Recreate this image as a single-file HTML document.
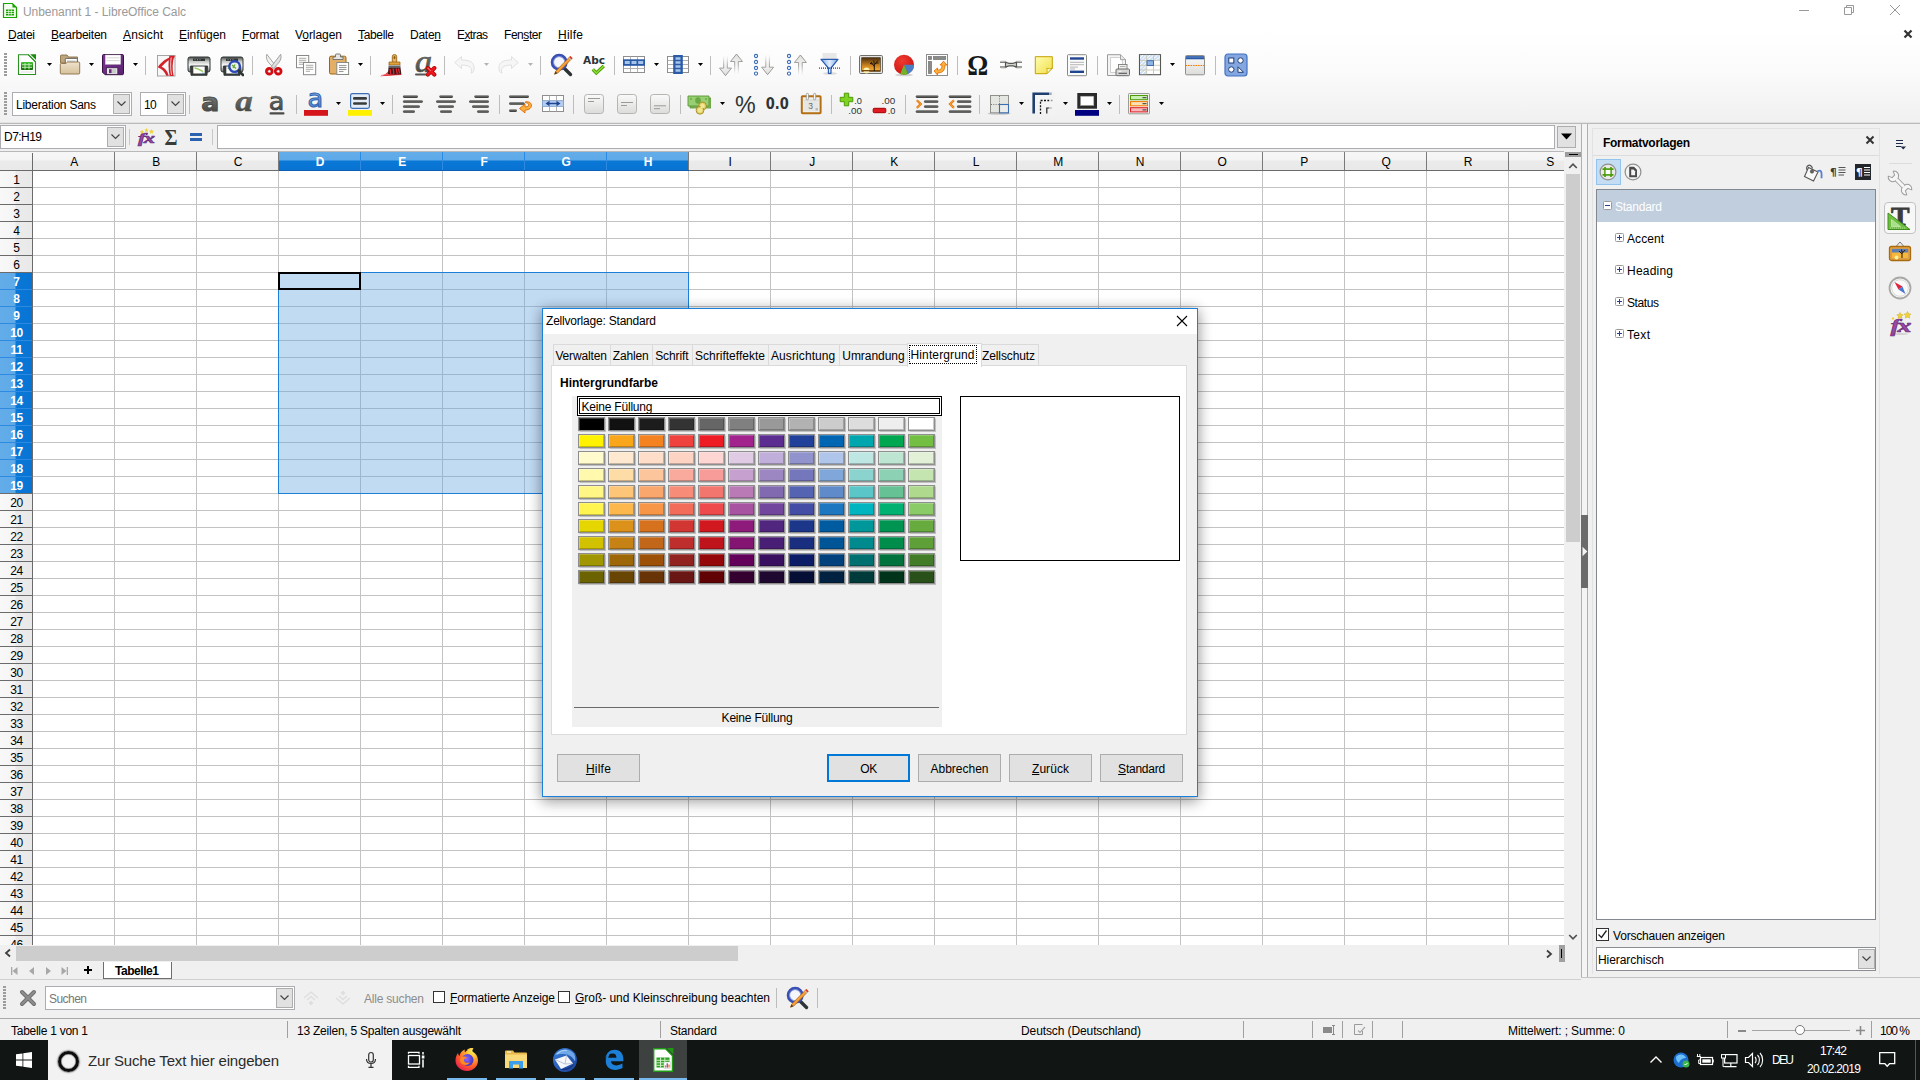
<!DOCTYPE html>
<html lang="de"><head><meta charset="utf-8"><title>Unbenannt 1 - LibreOffice Calc</title>
<style>
html,body{margin:0;padding:0;}
body{width:1920px;height:1080px;overflow:hidden;position:relative;background:#f0f0f0;font-family:"Liberation Sans","DejaVu Sans",sans-serif;font-size:12px;}
div,span.t,svg{position:absolute;box-sizing:border-box;}
span.t{white-space:nowrap;}
.sec{left:0;top:0;width:0;height:0;overflow:visible;}
u{text-decoration:underline;text-underline-offset:1px;}
</style></head>
<body>
<div class="sec" id="title-bar">
<div style="left:0px;top:0px;width:1920px;height:123px;background:linear-gradient(#fff 0,#fff 28px,#fbfbfb 70px,#f0f0f0 122px);"></div>
<div style="left:0px;top:122px;width:1920px;height:2px;background:linear-gradient(#e3e3e3 0,#e3e3e3 1px,#b9b9b9 1px);"></div>
<svg style="left:2px;top:2px;" width="16" height="17" viewBox="0 0 16 17"><path d="M1.5 1.5h9l4 4v10h-13z" fill="#f4fbef" stroke="#18a303" stroke-width="1.2"/><path d="M10.5 1.5l4 4h-4z" fill="#18a303"/><rect x="4" y="7.5" width="8" height="6" fill="#18a303"/><path d="M4 9.5h8M4 11.5h8M6.7 7.5v6M9.3 7.5v6" stroke="#fff" stroke-width=".7"/></svg>
<span class="t" style="left:23px;top:5.84px;font-size:12px;line-height:12px;color:#9a9a9a;letter-spacing:-0.053px;">Unbenannt 1 - LibreOffice Calc</span>
<div style="left:1799px;top:10px;width:10px;height:1px;background:#999;"></div>
<svg style="left:1843px;top:4px;" width="12" height="12" viewBox="0 0 12 12"><path d="M1.5 3.5h7v7h-7z M3.5 3.5v-2h7v7h-2" fill="none" stroke="#999" stroke-width="1"/></svg>
<svg style="left:1889px;top:4px;" width="12" height="12" viewBox="0 0 12 12"><path d="M1 1l10 10M11 1L1 11" stroke="#999" stroke-width="1"/></svg>
</div>
<div class="sec" id="menu-bar">
<span class="t" style="left:8px;top:28.54px;font-size:12px;line-height:12px;color:#000;letter-spacing:-0.254px;"><u>D</u>atei</span>
<span class="t" style="left:51px;top:28.54px;font-size:12px;line-height:12px;color:#000;letter-spacing:-0.227px;"><u>B</u>earbeiten</span>
<span class="t" style="left:123px;top:28.54px;font-size:12px;line-height:12px;color:#000;letter-spacing:0.107px;"><u>A</u>nsicht</span>
<span class="t" style="left:179px;top:28.54px;font-size:12px;line-height:12px;color:#000;letter-spacing:-0.054px;"><u>E</u>infügen</span>
<span class="t" style="left:242px;top:28.54px;font-size:12px;line-height:12px;color:#000;letter-spacing:-0.203px;"><u>F</u>ormat</span>
<span class="t" style="left:295px;top:28.54px;font-size:12px;line-height:12px;color:#000;letter-spacing:-0.054px;">V<u>o</u>rlagen</span>
<span class="t" style="left:358px;top:28.54px;font-size:12px;line-height:12px;color:#000;letter-spacing:-0.339px;"><u>T</u>abelle</span>
<span class="t" style="left:410px;top:28.54px;font-size:12px;line-height:12px;color:#000;letter-spacing:-0.258px;">Date<u>n</u></span>
<span class="t" style="left:457px;top:28.54px;font-size:12px;line-height:12px;color:#000;letter-spacing:-0.603px;">E<u>x</u>tras</span>
<span class="t" style="left:504px;top:28.54px;font-size:12px;line-height:12px;color:#000;letter-spacing:-0.448px;">Fen<u>s</u>ter</span>
<span class="t" style="left:558px;top:28.54px;font-size:12px;line-height:12px;color:#000;letter-spacing:0.246px;"><u>H</u>ilfe</span>
<svg style="left:1903px;top:29px;" width="10" height="10" viewBox="0 0 10 10"><path d="M1.5 1.5l7 7M8.5 1.5l-7 7" stroke="#333" stroke-width="2.2"/></svg>
</div>
<div class="sec" id="formula-bar">
<div style="left:0px;top:125px;width:126px;height:24px;background:#fff;border:1px solid #abadb3;"></div>
<span class="t" style="left:4px;top:131.34px;font-size:12px;line-height:12px;color:#000;letter-spacing:-0.537px;">D7:H19</span>
<div style="left:107px;top:127px;width:17px;height:20px;background:#e1e1e1;border:1px solid #adadad;"></div>
<svg style="left:110px;top:133px;" width="11" height="8" viewBox="0 0 11 8"><path d="M1.5 1.5l4 4 4-4" fill="none" stroke="#444" stroke-width="1.2"/></svg>
<div style="left:129px;top:129px;width:1px;height:16px;background:#c8c8c8;"></div>
<div style="left:212px;top:129px;width:1px;height:16px;background:#c8c8c8;"></div>
<svg style="left:136px;top:127px;" width="20" height="20" viewBox="0 0 20 20"><text x="2" y="16.300" font-family="Liberation Serif,serif" font-style="italic" font-weight="bold" font-size="14" fill="#9a4aa6" stroke="#6a2c78" stroke-width=".6" letter-spacing="-1" textLength="15.500" lengthAdjust="spacingAndGlyphs">fx</text><path d="M6 2.500l.7 1.400 1.500.2-1.100 1 .3 1.500-1.400-.7-1.400.7.300-1.500-1.100-1 1.500-.2z" fill="#f0d23c"/><path d="M10.500 1l.7 1.400 1.500.2-1.100 1 .3 1.500-1.400-.7-1.400.7.300-1.500-1.100-1 1.500-.2z" fill="#f0d23c"/><path d="M15.500 2l.8 1.600 1.700.2-1.200 1.200.3 1.700-1.600-.8-1.600.8.300-1.700-1.200-1.200 1.700-.2z" fill="#f0d23c"/></svg>
<svg style="left:163px;top:127px;" width="18" height="20" viewBox="0 0 18 20"><text x="1.500" y="17.800" font-family="Liberation Serif,serif" font-weight="bold" font-size="24" fill="#3a3c3a" textLength="13" lengthAdjust="spacingAndGlyphs">Σ</text></svg>
<div style="left:190px;top:133px;width:12px;height:2.8px;background:#2b62b0;"></div>
<div style="left:190px;top:138.2px;width:12px;height:2.8px;background:#2b62b0;"></div>
<div style="left:217px;top:125px;width:1338px;height:24px;background:#fff;border:1px solid #abadb3;"></div>
<div style="left:1557px;top:126px;width:19px;height:22px;background:#e1e1e1;border:1px solid #adadad;"></div>
<svg style="left:1560px;top:132px;" width="13" height="9" viewBox="0 0 13 9"><path d="M1 1.5h11l-5.5 6z" fill="#000"/></svg>
</div>
<div class="sec" id="grid">
<div style="left:0px;top:152px;width:1564px;height:793px;background:#fff;overflow:hidden;"></div>
<div style="left:33px;top:171px;width:1531px;height:774px;background-image:linear-gradient(to right,transparent 81px,#c3c3c3 81px),linear-gradient(to bottom,transparent 16px,#c3c3c3 16px);background-size:82px 17px,82px 17px;"></div>
<div style="left:0px;top:151px;width:1564px;height:1px;background:#b9b9b9;"></div>
<div style="left:0px;top:152px;width:1564px;height:18px;background:linear-gradient(#f7f7f7 0,#f4f4f4 8px,#ebebeb 9px,#e9e9e9 18px);"></div>
<div style="left:0px;top:170px;width:32px;height:775px;background:linear-gradient(to right,#f8f8f8 0,#f5f5f5 15px,#ebebeb 16px,#e9e9e9 32px);"></div>
<div style="left:279px;top:152px;width:410px;height:18px;background:linear-gradient(#62ade9 0,#5ea9e7 8px,#0a78d7 9px,#0873d2 18px);"></div>
<div style="left:0px;top:272px;width:32px;height:221px;background:linear-gradient(to right,#62ade9 0,#5ea9e7 15px,#0a78d7 16px,#0873d2 32px);"></div>
<div style="left:114px;top:152px;width:1px;height:18px;background:#7a7a7a;"></div>
<span class="t" style="left:-76.0px;width:300px;text-align:center;top:155.54px;font-size:12px;line-height:12px;color:#000;letter-spacing:-0.300px;">A</span>
<div style="left:196px;top:152px;width:1px;height:18px;background:#7a7a7a;"></div>
<span class="t" style="left:6.0px;width:300px;text-align:center;top:155.54px;font-size:12px;line-height:12px;color:#000;letter-spacing:-0.300px;">B</span>
<div style="left:278px;top:152px;width:1px;height:18px;background:#7a7a7a;"></div>
<span class="t" style="left:88.0px;width:300px;text-align:center;top:155.54px;font-size:12px;line-height:12px;color:#000;letter-spacing:-0.300px;">C</span>
<div style="left:360px;top:152px;width:1px;height:18px;background:#2d8ae0;"></div>
<span class="t" style="left:170.0px;width:300px;text-align:center;top:155.54px;font-size:12px;line-height:12px;color:#fff;letter-spacing:-0.300px;font-weight:700;">D</span>
<div style="left:442px;top:152px;width:1px;height:18px;background:#2d8ae0;"></div>
<span class="t" style="left:252.0px;width:300px;text-align:center;top:155.54px;font-size:12px;line-height:12px;color:#fff;letter-spacing:-0.300px;font-weight:700;">E</span>
<div style="left:524px;top:152px;width:1px;height:18px;background:#2d8ae0;"></div>
<span class="t" style="left:334.0px;width:300px;text-align:center;top:155.54px;font-size:12px;line-height:12px;color:#fff;letter-spacing:-0.300px;font-weight:700;">F</span>
<div style="left:606px;top:152px;width:1px;height:18px;background:#2d8ae0;"></div>
<span class="t" style="left:416.0px;width:300px;text-align:center;top:155.54px;font-size:12px;line-height:12px;color:#fff;letter-spacing:-0.300px;font-weight:700;">G</span>
<div style="left:688px;top:152px;width:1px;height:18px;background:#7a7a7a;"></div>
<span class="t" style="left:498.0px;width:300px;text-align:center;top:155.54px;font-size:12px;line-height:12px;color:#fff;letter-spacing:-0.300px;font-weight:700;">H</span>
<div style="left:770px;top:152px;width:1px;height:18px;background:#7a7a7a;"></div>
<span class="t" style="left:580.0px;width:300px;text-align:center;top:155.54px;font-size:12px;line-height:12px;color:#000;letter-spacing:-0.300px;">I</span>
<div style="left:852px;top:152px;width:1px;height:18px;background:#7a7a7a;"></div>
<span class="t" style="left:662.0px;width:300px;text-align:center;top:155.54px;font-size:12px;line-height:12px;color:#000;letter-spacing:-0.300px;">J</span>
<div style="left:934px;top:152px;width:1px;height:18px;background:#7a7a7a;"></div>
<span class="t" style="left:744.0px;width:300px;text-align:center;top:155.54px;font-size:12px;line-height:12px;color:#000;letter-spacing:-0.300px;">K</span>
<div style="left:1016px;top:152px;width:1px;height:18px;background:#7a7a7a;"></div>
<span class="t" style="left:826.0px;width:300px;text-align:center;top:155.54px;font-size:12px;line-height:12px;color:#000;letter-spacing:-0.300px;">L</span>
<div style="left:1098px;top:152px;width:1px;height:18px;background:#7a7a7a;"></div>
<span class="t" style="left:908.0px;width:300px;text-align:center;top:155.54px;font-size:12px;line-height:12px;color:#000;letter-spacing:-0.300px;">M</span>
<div style="left:1180px;top:152px;width:1px;height:18px;background:#7a7a7a;"></div>
<span class="t" style="left:990.0px;width:300px;text-align:center;top:155.54px;font-size:12px;line-height:12px;color:#000;letter-spacing:-0.300px;">N</span>
<div style="left:1262px;top:152px;width:1px;height:18px;background:#7a7a7a;"></div>
<span class="t" style="left:1072.0px;width:300px;text-align:center;top:155.54px;font-size:12px;line-height:12px;color:#000;letter-spacing:-0.300px;">O</span>
<div style="left:1344px;top:152px;width:1px;height:18px;background:#7a7a7a;"></div>
<span class="t" style="left:1154.0px;width:300px;text-align:center;top:155.54px;font-size:12px;line-height:12px;color:#000;letter-spacing:-0.300px;">P</span>
<div style="left:1426px;top:152px;width:1px;height:18px;background:#7a7a7a;"></div>
<span class="t" style="left:1236.0px;width:300px;text-align:center;top:155.54px;font-size:12px;line-height:12px;color:#000;letter-spacing:-0.300px;">Q</span>
<div style="left:1508px;top:152px;width:1px;height:18px;background:#7a7a7a;"></div>
<span class="t" style="left:1318.0px;width:300px;text-align:center;top:155.54px;font-size:12px;line-height:12px;color:#000;letter-spacing:-0.300px;">R</span>
<span class="t" style="left:1400px;width:300px;text-align:center;top:155.54px;font-size:12px;line-height:12px;color:#000;letter-spacing:-0.300px;">S</span>
<div style="left:32px;top:153px;width:1px;height:792px;background:#6b6b6b;"></div>
<div style="left:0px;top:170px;width:1564px;height:1px;background:#6b6b6b;"></div>
<div style="left:279px;top:170px;width:410px;height:1px;background:#0a5fb0;"></div>
<div style="left:0px;top:187px;width:32px;height:1px;background:#6b6b6b;"></div>
<span class="t" style="left:-133.5px;width:300px;text-align:center;top:174.04px;font-size:12px;line-height:12px;color:#000;letter-spacing:-0.300px;">1</span>
<div style="left:0px;top:204px;width:32px;height:1px;background:#6b6b6b;"></div>
<span class="t" style="left:-133.5px;width:300px;text-align:center;top:191.04px;font-size:12px;line-height:12px;color:#000;letter-spacing:-0.300px;">2</span>
<div style="left:0px;top:221px;width:32px;height:1px;background:#6b6b6b;"></div>
<span class="t" style="left:-133.5px;width:300px;text-align:center;top:208.04px;font-size:12px;line-height:12px;color:#000;letter-spacing:-0.300px;">3</span>
<div style="left:0px;top:238px;width:32px;height:1px;background:#6b6b6b;"></div>
<span class="t" style="left:-133.5px;width:300px;text-align:center;top:225.04px;font-size:12px;line-height:12px;color:#000;letter-spacing:-0.300px;">4</span>
<div style="left:0px;top:255px;width:32px;height:1px;background:#6b6b6b;"></div>
<span class="t" style="left:-133.5px;width:300px;text-align:center;top:242.04px;font-size:12px;line-height:12px;color:#000;letter-spacing:-0.300px;">5</span>
<div style="left:0px;top:272px;width:32px;height:1px;background:#6b6b6b;"></div>
<span class="t" style="left:-133.5px;width:300px;text-align:center;top:259.04px;font-size:12px;line-height:12px;color:#000;letter-spacing:-0.300px;">6</span>
<div style="left:0px;top:289px;width:32px;height:1px;background:#2d8ae0;"></div>
<span class="t" style="left:-133.5px;width:300px;text-align:center;top:276.04px;font-size:12px;line-height:12px;color:#fff;letter-spacing:-0.300px;font-weight:700;">7</span>
<div style="left:0px;top:306px;width:32px;height:1px;background:#2d8ae0;"></div>
<span class="t" style="left:-133.5px;width:300px;text-align:center;top:293.04px;font-size:12px;line-height:12px;color:#fff;letter-spacing:-0.300px;font-weight:700;">8</span>
<div style="left:0px;top:323px;width:32px;height:1px;background:#2d8ae0;"></div>
<span class="t" style="left:-133.5px;width:300px;text-align:center;top:310.04px;font-size:12px;line-height:12px;color:#fff;letter-spacing:-0.300px;font-weight:700;">9</span>
<div style="left:0px;top:340px;width:32px;height:1px;background:#2d8ae0;"></div>
<span class="t" style="left:-133.5px;width:300px;text-align:center;top:327.04px;font-size:12px;line-height:12px;color:#fff;letter-spacing:-0.300px;font-weight:700;">10</span>
<div style="left:0px;top:357px;width:32px;height:1px;background:#2d8ae0;"></div>
<span class="t" style="left:-133.5px;width:300px;text-align:center;top:344.04px;font-size:12px;line-height:12px;color:#fff;letter-spacing:-0.300px;font-weight:700;">11</span>
<div style="left:0px;top:374px;width:32px;height:1px;background:#2d8ae0;"></div>
<span class="t" style="left:-133.5px;width:300px;text-align:center;top:361.04px;font-size:12px;line-height:12px;color:#fff;letter-spacing:-0.300px;font-weight:700;">12</span>
<div style="left:0px;top:391px;width:32px;height:1px;background:#2d8ae0;"></div>
<span class="t" style="left:-133.5px;width:300px;text-align:center;top:378.04px;font-size:12px;line-height:12px;color:#fff;letter-spacing:-0.300px;font-weight:700;">13</span>
<div style="left:0px;top:408px;width:32px;height:1px;background:#2d8ae0;"></div>
<span class="t" style="left:-133.5px;width:300px;text-align:center;top:395.04px;font-size:12px;line-height:12px;color:#fff;letter-spacing:-0.300px;font-weight:700;">14</span>
<div style="left:0px;top:425px;width:32px;height:1px;background:#2d8ae0;"></div>
<span class="t" style="left:-133.5px;width:300px;text-align:center;top:412.04px;font-size:12px;line-height:12px;color:#fff;letter-spacing:-0.300px;font-weight:700;">15</span>
<div style="left:0px;top:442px;width:32px;height:1px;background:#2d8ae0;"></div>
<span class="t" style="left:-133.5px;width:300px;text-align:center;top:429.04px;font-size:12px;line-height:12px;color:#fff;letter-spacing:-0.300px;font-weight:700;">16</span>
<div style="left:0px;top:459px;width:32px;height:1px;background:#2d8ae0;"></div>
<span class="t" style="left:-133.5px;width:300px;text-align:center;top:446.04px;font-size:12px;line-height:12px;color:#fff;letter-spacing:-0.300px;font-weight:700;">17</span>
<div style="left:0px;top:476px;width:32px;height:1px;background:#2d8ae0;"></div>
<span class="t" style="left:-133.5px;width:300px;text-align:center;top:463.04px;font-size:12px;line-height:12px;color:#fff;letter-spacing:-0.300px;font-weight:700;">18</span>
<div style="left:0px;top:493px;width:32px;height:1px;background:#6b6b6b;"></div>
<span class="t" style="left:-133.5px;width:300px;text-align:center;top:480.04px;font-size:12px;line-height:12px;color:#fff;letter-spacing:-0.300px;font-weight:700;">19</span>
<div style="left:0px;top:510px;width:32px;height:1px;background:#6b6b6b;"></div>
<span class="t" style="left:-133.5px;width:300px;text-align:center;top:497.04px;font-size:12px;line-height:12px;color:#000;letter-spacing:-0.300px;">20</span>
<div style="left:0px;top:527px;width:32px;height:1px;background:#6b6b6b;"></div>
<span class="t" style="left:-133.5px;width:300px;text-align:center;top:514.04px;font-size:12px;line-height:12px;color:#000;letter-spacing:-0.300px;">21</span>
<div style="left:0px;top:544px;width:32px;height:1px;background:#6b6b6b;"></div>
<span class="t" style="left:-133.5px;width:300px;text-align:center;top:531.04px;font-size:12px;line-height:12px;color:#000;letter-spacing:-0.300px;">22</span>
<div style="left:0px;top:561px;width:32px;height:1px;background:#6b6b6b;"></div>
<span class="t" style="left:-133.5px;width:300px;text-align:center;top:548.04px;font-size:12px;line-height:12px;color:#000;letter-spacing:-0.300px;">23</span>
<div style="left:0px;top:578px;width:32px;height:1px;background:#6b6b6b;"></div>
<span class="t" style="left:-133.5px;width:300px;text-align:center;top:565.04px;font-size:12px;line-height:12px;color:#000;letter-spacing:-0.300px;">24</span>
<div style="left:0px;top:595px;width:32px;height:1px;background:#6b6b6b;"></div>
<span class="t" style="left:-133.5px;width:300px;text-align:center;top:582.04px;font-size:12px;line-height:12px;color:#000;letter-spacing:-0.300px;">25</span>
<div style="left:0px;top:612px;width:32px;height:1px;background:#6b6b6b;"></div>
<span class="t" style="left:-133.5px;width:300px;text-align:center;top:599.04px;font-size:12px;line-height:12px;color:#000;letter-spacing:-0.300px;">26</span>
<div style="left:0px;top:629px;width:32px;height:1px;background:#6b6b6b;"></div>
<span class="t" style="left:-133.5px;width:300px;text-align:center;top:616.04px;font-size:12px;line-height:12px;color:#000;letter-spacing:-0.300px;">27</span>
<div style="left:0px;top:646px;width:32px;height:1px;background:#6b6b6b;"></div>
<span class="t" style="left:-133.5px;width:300px;text-align:center;top:633.04px;font-size:12px;line-height:12px;color:#000;letter-spacing:-0.300px;">28</span>
<div style="left:0px;top:663px;width:32px;height:1px;background:#6b6b6b;"></div>
<span class="t" style="left:-133.5px;width:300px;text-align:center;top:650.04px;font-size:12px;line-height:12px;color:#000;letter-spacing:-0.300px;">29</span>
<div style="left:0px;top:680px;width:32px;height:1px;background:#6b6b6b;"></div>
<span class="t" style="left:-133.5px;width:300px;text-align:center;top:667.04px;font-size:12px;line-height:12px;color:#000;letter-spacing:-0.300px;">30</span>
<div style="left:0px;top:697px;width:32px;height:1px;background:#6b6b6b;"></div>
<span class="t" style="left:-133.5px;width:300px;text-align:center;top:684.04px;font-size:12px;line-height:12px;color:#000;letter-spacing:-0.300px;">31</span>
<div style="left:0px;top:714px;width:32px;height:1px;background:#6b6b6b;"></div>
<span class="t" style="left:-133.5px;width:300px;text-align:center;top:701.04px;font-size:12px;line-height:12px;color:#000;letter-spacing:-0.300px;">32</span>
<div style="left:0px;top:731px;width:32px;height:1px;background:#6b6b6b;"></div>
<span class="t" style="left:-133.5px;width:300px;text-align:center;top:718.04px;font-size:12px;line-height:12px;color:#000;letter-spacing:-0.300px;">33</span>
<div style="left:0px;top:748px;width:32px;height:1px;background:#6b6b6b;"></div>
<span class="t" style="left:-133.5px;width:300px;text-align:center;top:735.04px;font-size:12px;line-height:12px;color:#000;letter-spacing:-0.300px;">34</span>
<div style="left:0px;top:765px;width:32px;height:1px;background:#6b6b6b;"></div>
<span class="t" style="left:-133.5px;width:300px;text-align:center;top:752.04px;font-size:12px;line-height:12px;color:#000;letter-spacing:-0.300px;">35</span>
<div style="left:0px;top:782px;width:32px;height:1px;background:#6b6b6b;"></div>
<span class="t" style="left:-133.5px;width:300px;text-align:center;top:769.04px;font-size:12px;line-height:12px;color:#000;letter-spacing:-0.300px;">36</span>
<div style="left:0px;top:799px;width:32px;height:1px;background:#6b6b6b;"></div>
<span class="t" style="left:-133.5px;width:300px;text-align:center;top:786.04px;font-size:12px;line-height:12px;color:#000;letter-spacing:-0.300px;">37</span>
<div style="left:0px;top:816px;width:32px;height:1px;background:#6b6b6b;"></div>
<span class="t" style="left:-133.5px;width:300px;text-align:center;top:803.04px;font-size:12px;line-height:12px;color:#000;letter-spacing:-0.300px;">38</span>
<div style="left:0px;top:833px;width:32px;height:1px;background:#6b6b6b;"></div>
<span class="t" style="left:-133.5px;width:300px;text-align:center;top:820.04px;font-size:12px;line-height:12px;color:#000;letter-spacing:-0.300px;">39</span>
<div style="left:0px;top:850px;width:32px;height:1px;background:#6b6b6b;"></div>
<span class="t" style="left:-133.5px;width:300px;text-align:center;top:837.04px;font-size:12px;line-height:12px;color:#000;letter-spacing:-0.300px;">40</span>
<div style="left:0px;top:867px;width:32px;height:1px;background:#6b6b6b;"></div>
<span class="t" style="left:-133.5px;width:300px;text-align:center;top:854.04px;font-size:12px;line-height:12px;color:#000;letter-spacing:-0.300px;">41</span>
<div style="left:0px;top:884px;width:32px;height:1px;background:#6b6b6b;"></div>
<span class="t" style="left:-133.5px;width:300px;text-align:center;top:871.04px;font-size:12px;line-height:12px;color:#000;letter-spacing:-0.300px;">42</span>
<div style="left:0px;top:901px;width:32px;height:1px;background:#6b6b6b;"></div>
<span class="t" style="left:-133.5px;width:300px;text-align:center;top:888.04px;font-size:12px;line-height:12px;color:#000;letter-spacing:-0.300px;">43</span>
<div style="left:0px;top:918px;width:32px;height:1px;background:#6b6b6b;"></div>
<span class="t" style="left:-133.5px;width:300px;text-align:center;top:905.04px;font-size:12px;line-height:12px;color:#000;letter-spacing:-0.300px;">44</span>
<div style="left:0px;top:935px;width:32px;height:1px;background:#6b6b6b;"></div>
<span class="t" style="left:-133.5px;width:300px;text-align:center;top:922.04px;font-size:12px;line-height:12px;color:#000;letter-spacing:-0.300px;">45</span>
<span class="t" style="left:-133.5px;width:300px;text-align:center;top:939.04px;font-size:12px;line-height:12px;color:#000;letter-spacing:-0.300px;">46</span>
<div style="left:278px;top:272px;width:411px;height:222px;background:rgba(100,165,225,.40);border:1px solid #1e7fd6;"></div>
<div style="left:278px;top:272px;width:83px;height:18px;border:2px solid #000;"></div>
</div>
<div class="sec" id="scrollbars">
<div style="left:1565px;top:152px;width:16px;height:793px;background:#f0f0f0;"></div>
<div style="left:1565px;top:152px;width:16px;height:5px;background:#9d9d9d;"></div>
<div style="left:1569px;top:154px;width:9px;height:1px;background:#000;"></div>
<svg style="left:1568px;top:162px;" width="10" height="8" viewBox="0 0 10 8"><path d="M1.2 6l3.8-3.8L8.8 6" fill="none" stroke="#505050" stroke-width="1.7"/></svg>
<div style="left:1566px;top:174px;width:14px;height:368px;background:#cdcdcd;"></div>
<svg style="left:1568px;top:933px;" width="10" height="8" viewBox="0 0 10 8"><path d="M1.2 2l3.8 3.8L8.8 2" fill="none" stroke="#505050" stroke-width="1.7"/></svg>
</div>
<div class="sec" id="toolbars">
<svg style="left:4px;top:53px;" width="3" height="24" viewBox="0 0 3 24"><rect x="0" y="0" width="3" height="2" fill="#9c9c9c"/><rect x="0" y="3" width="3" height="2" fill="#9c9c9c"/><rect x="0" y="6" width="3" height="2" fill="#9c9c9c"/><rect x="0" y="9" width="3" height="2" fill="#9c9c9c"/><rect x="0" y="12" width="3" height="2" fill="#9c9c9c"/><rect x="0" y="15" width="3" height="2" fill="#9c9c9c"/><rect x="0" y="18" width="3" height="2" fill="#9c9c9c"/><rect x="0" y="21" width="3" height="2" fill="#9c9c9c"/></svg>
<svg style="left:4px;top:92px;" width="3" height="24" viewBox="0 0 3 24"><rect x="0" y="0" width="3" height="2" fill="#9c9c9c"/><rect x="0" y="3" width="3" height="2" fill="#9c9c9c"/><rect x="0" y="6" width="3" height="2" fill="#9c9c9c"/><rect x="0" y="9" width="3" height="2" fill="#9c9c9c"/><rect x="0" y="12" width="3" height="2" fill="#9c9c9c"/><rect x="0" y="15" width="3" height="2" fill="#9c9c9c"/><rect x="0" y="18" width="3" height="2" fill="#9c9c9c"/><rect x="0" y="21" width="3" height="2" fill="#9c9c9c"/></svg>
<svg style="left:3px;top:986px;" width="3" height="24" viewBox="0 0 3 24"><rect x="0" y="0" width="3" height="2" fill="#9c9c9c"/><rect x="0" y="3" width="3" height="2" fill="#9c9c9c"/><rect x="0" y="6" width="3" height="2" fill="#9c9c9c"/><rect x="0" y="9" width="3" height="2" fill="#9c9c9c"/><rect x="0" y="12" width="3" height="2" fill="#9c9c9c"/><rect x="0" y="15" width="3" height="2" fill="#9c9c9c"/><rect x="0" y="18" width="3" height="2" fill="#9c9c9c"/><rect x="0" y="21" width="3" height="2" fill="#9c9c9c"/></svg>
<svg width="0" height="0" style="left:0;top:0"><defs>
<linearGradient id="gGreen" x1="0" y1="0" x2="0" y2="1"><stop offset="0" stop-color="#43c330"/><stop offset="1" stop-color="#106802"/></linearGradient>
<linearGradient id="gTan" x1="0" y1="0" x2="0" y2="1"><stop offset="0" stop-color="#efe3cc"/><stop offset="1" stop-color="#d6c19b"/></linearGradient>
<linearGradient id="gPurple" x1="0" y1="0" x2="1" y2="1"><stop offset="0" stop-color="#7c3591"/><stop offset="1" stop-color="#5a2370"/></linearGradient>
<linearGradient id="gPrn" x1="0" y1="0" x2="0" y2="1"><stop offset="0" stop-color="#fdfdfd"/><stop offset="1" stop-color="#8b8d89"/></linearGradient>
<linearGradient id="gGray" x1="0" y1="0" x2="0" y2="1"><stop offset="0" stop-color="#fafafa"/><stop offset="1" stop-color="#dcdcda"/></linearGradient>
<linearGradient id="gA" x1="0" y1="0" x2="0" y2="1"><stop offset="0" stop-color="#8a8c88"/><stop offset="1" stop-color="#3a3c39"/></linearGradient>
<linearGradient id="gBar" x1="0" y1="0" x2="0" y2="1"><stop offset="0" stop-color="#80827e"/><stop offset="1" stop-color="#2e302d"/></linearGradient>
<linearGradient id="gArrD" x1="0" y1="0" x2="0" y2="1"><stop offset="0" stop-color="#fff" stop-opacity="0"/><stop offset=".45" stop-color="#f4f4f2"/><stop offset="1" stop-color="#dededc"/></linearGradient>
<linearGradient id="gArrDs" x1="0" y1="0" x2="0" y2="1"><stop offset="0" stop-color="#999" stop-opacity="0"/><stop offset=".5" stop-color="#9c9c9a"/><stop offset="1" stop-color="#8a8a88"/></linearGradient>
<linearGradient id="gArrU" x1="0" y1="1" x2="0" y2="0"><stop offset="0" stop-color="#fff" stop-opacity="0"/><stop offset=".45" stop-color="#f4f4f2"/><stop offset="1" stop-color="#dededc"/></linearGradient>
<linearGradient id="gArrUs" x1="0" y1="1" x2="0" y2="0"><stop offset="0" stop-color="#999" stop-opacity="0"/><stop offset=".5" stop-color="#9c9c9a"/><stop offset="1" stop-color="#8a8a88"/></linearGradient>
<linearGradient id="gFun" x1="0" y1="0" x2="1" y2="0"><stop offset="0" stop-color="#7fa8e0"/><stop offset=".5" stop-color="#e3eefb"/><stop offset="1" stop-color="#7fa8e0"/></linearGradient>
<linearGradient id="gSun" x1="0" y1="0" x2="0" y2="1"><stop offset="0" stop-color="#4a2f10"/><stop offset=".55" stop-color="#c77f1c"/><stop offset="1" stop-color="#fcb63a"/></linearGradient>
<radialGradient id="gPie" cx=".4" cy=".3" r=".8"><stop offset="0" stop-color="#f03a30"/><stop offset="1" stop-color="#c80f0f"/></radialGradient>
<linearGradient id="gNote" x1="0" y1="0" x2="1" y2="1"><stop offset="0" stop-color="#fffdb0"/><stop offset="1" stop-color="#f1df4a"/></linearGradient>
<linearGradient id="gOr" x1="0" y1="0" x2="0" y2="1"><stop offset="0" stop-color="#fcc16a"/><stop offset="1" stop-color="#f08a1c"/></linearGradient>
<linearGradient id="gBlueA" x1="0" y1="0" x2="0" y2="1"><stop offset="0" stop-color="#a9c8f0"/><stop offset="1" stop-color="#3f74c4"/></linearGradient>
</defs></svg>
<svg style="left:15px;top:53px;" width="24" height="24" viewBox="0 0 24 24"><path d="M3.500 1.700h9.800l7.200 7.200v12.600h-17z" fill="#fff" stroke="#2b9222" stroke-width="1.100"/><path d="M15.200 1.200h5.800v5.800z" fill="#1d8a12"/><path d="M13.300 1.700l7.200 7.200" stroke="#2b9222" stroke-width="1.100"/><rect x="6" y="9" width="12" height="8" rx=".8" fill="url(#gGreen)"/><path d="M7 11.700h10M7 14.300h10M10 10v6.500M14 10v6.500" stroke="#c8f0bf" stroke-width=".9"/><path d="M6 19h12" stroke="#d5d5d5" stroke-width=".8"/></svg>
<svg style="left:47px;top:63px;" width="5" height="3" viewBox="0 0 5 3"><path d="M0 0h5l-2.500 3z" fill="#000"/></svg>
<svg style="left:58px;top:53px;" width="24" height="24" viewBox="0 0 24 24"><path d="M2.500 3a1 1 0 0 1 1-1h5.500l1.500 2h9v6h-17z" fill="#bda57d" stroke="#8a7148" stroke-width=".9"/><rect x="7.300" y="5.400" width="12" height="7" rx=".8" fill="#fff" stroke="#5d5d5d" stroke-width=".9"/><rect x="9" y="7.300" width="8.500" height="3" fill="#d8d8d8"/><path d="M2.300 20v-8.500a1 1 0 0 1 1-1h4.500l1.700-1.500h11.200a1 1 0 0 1 1 1v10a1 1 0 0 1-1 1h-17.400a1 1 0 0 1-1-1z" fill="url(#gTan)" stroke="#8a7148" stroke-width=".9"/></svg>
<svg style="left:89px;top:63px;" width="5" height="3" viewBox="0 0 5 3"><path d="M0 0h5l-2.500 3z" fill="#000"/></svg>
<svg style="left:101px;top:53px;" width="24" height="24" viewBox="0 0 24 24"><path d="M1.500 2.700a1.200 1.200 0 0 1 1.200-1.200h18.600a1.200 1.200 0 0 1 1.200 1.200v17.800a1.200 1.200 0 0 1-1.200 1.200h-17.300l-2.500-2.500z" fill="url(#gPurple)" stroke="#3b1047" stroke-width="1"/><rect x="4.300" y="2" width="15.400" height="9.300" fill="#fff" stroke="#c9c9c9" stroke-width=".5"/><path d="M5.500 4.800h13M5.500 7.600h13" stroke="#c9cdc4" stroke-width=".8"/><rect x="5.500" y="14.800" width="11.300" height="6.500" fill="#e4e6e1" stroke="#3b1047" stroke-width=".7"/><rect x="8" y="16.200" width="2.600" height="3.900" fill="#6b2c80"/><rect x="11" y="16.200" width="4" height="3.900" fill="#c9cbc6"/></svg>
<svg style="left:133px;top:63px;" width="5" height="3" viewBox="0 0 5 3"><path d="M0 0h5l-2.500 3z" fill="#000"/></svg>
<div style="left:145px;top:56px;width:1px;height:19px;background:#bdbdbd;"></div>
<svg style="left:154px;top:53px;" width="24" height="24" viewBox="0 0 24 24"><rect x="3.500" y="2.500" width="17.500" height="20.500" fill="#f7f7f7" stroke="#9c9c9c" stroke-width=".9"/><path d="M20.500 3c-7 1.200-13.500 6-16.800 11.300 4.200 1.500 7 4.500 8.600 8.500h2.500c-1.300-4.500-3.800-7.800-7.200-9 3.500-4.300 8-7.800 12.900-9.300z" fill="#d3222a"/><path d="M15.300 2.700c-1.100 6-1.100 13.500.4 20.200h4c-1.600-6.500-1.500-13.500.8-20.200z" fill="#d3222a"/><path d="M17.200 4.500c-.8 5.500-.7 12 .3 17.500" stroke="#f3c8c8" stroke-width="1" fill="none"/></svg>
<svg style="left:187px;top:53px;" width="24" height="24" viewBox="0 0 24 24"><defs><linearGradient id="gPb" x1="0" y1="0" x2="0" y2="1"><stop offset="0" stop-color="#4a4c49"/><stop offset=".3" stop-color="#c8cac6"/><stop offset=".55" stop-color="#fafafa"/><stop offset="1" stop-color="#6d6f6b"/></linearGradient></defs><path d="M3 4h18a2 2 0 0 1 2 2v11a2 2 0 0 1-2 2h-18a2 2 0 0 1-2-2v-11a2 2 0 0 1 2-2z" fill="url(#gPb)" stroke="#2e3436" stroke-width="1"/><rect x="6" y="5.500" width="12" height="2.600" rx=".5" fill="#2e3436"/><path d="M7.500 6.800h1M10 6.800h1M12.500 6.800h1" stroke="#aaa" stroke-width="1"/><path d="M3.500 13h17l-.5 9.300h-16z" fill="#3a3c39" stroke="#2e3436" stroke-width=".9"/><path d="M6.300 13.500h11.400v7h-11.400z" fill="#fff"/><path d="M7.500 15c3 .3 5.500 1.700 8.500 3.700" stroke="#9ccc65" stroke-width="1.600" fill="none"/><rect x="15" y="19.800" width="2" height=".9" fill="#3b8fe0"/></svg>
<svg style="left:220px;top:53px;" width="24" height="24" viewBox="0 0 24 24"><defs><linearGradient id="gPb" x1="0" y1="0" x2="0" y2="1"><stop offset="0" stop-color="#4a4c49"/><stop offset=".3" stop-color="#c8cac6"/><stop offset=".55" stop-color="#fafafa"/><stop offset="1" stop-color="#6d6f6b"/></linearGradient></defs><path d="M3 4h18a2 2 0 0 1 2 2v11a2 2 0 0 1-2 2h-18a2 2 0 0 1-2-2v-11a2 2 0 0 1 2-2z" fill="url(#gPb)" stroke="#2e3436" stroke-width="1"/><rect x="6" y="5.500" width="12" height="2.600" rx=".5" fill="#2e3436"/><path d="M7.500 6.800h1M10 6.800h1M12.500 6.800h1" stroke="#aaa" stroke-width="1"/><path d="M3.500 13h17l-.5 9.300h-16z" fill="#3a3c39" stroke="#2e3436" stroke-width=".9"/><path d="M6.300 13.500h11.400v7h-11.400z" fill="#fff"/><path d="M7.500 15c3 .3 5.500 1.700 8.500 3.700" stroke="#9ccc65" stroke-width="1.600" fill="none"/><rect x="15" y="19.800" width="2" height=".9" fill="#3b8fe0"/><circle cx="14.600" cy="13.600" r="5.300" fill="#e9f3e4" stroke="#2c48b5" stroke-width="2.400"/><path d="M12 12l4 3.500M13 15l2-3.500" stroke="#6aaa3a" stroke-width="1.400"/><path d="M18.700 17.700l4.300 4.300" stroke="#2e3436" stroke-width="2.600" stroke-linecap="round"/></svg>
<div style="left:252px;top:56px;width:1px;height:19px;background:#bdbdbd;"></div>
<svg style="left:262px;top:53px;" width="24" height="24" viewBox="0 0 24 24"><path d="M4.800 1.300c-1 3 0 6 2 8.500l5.400 5.700 1.800-2.200z" fill="#f2f2f0" stroke="#8e908c" stroke-width=".8"/><path d="M18.700 1.300c1 3 0 6-2 8.500l-5.400 5.700-1.800-2.200z" fill="#e2e2e0" stroke="#8e908c" stroke-width=".8"/><circle cx="7.300" cy="18.300" r="2.900" fill="#fff" stroke="#d40d12" stroke-width="2.700"/><circle cx="16.200" cy="18.300" r="2.900" fill="#fff" stroke="#d40d12" stroke-width="2.700"/><circle cx="7.300" cy="18.300" r="1.500" fill="#fff" stroke="#a40000" stroke-width=".5"/><circle cx="16.200" cy="18.300" r="1.500" fill="#fff" stroke="#a40000" stroke-width=".5"/></svg>
<svg style="left:294px;top:53px;" width="24" height="24" viewBox="0 0 24 24"><rect x="2.500" y="2.500" width="12.200" height="12.200" fill="#fff" stroke="#888a85" stroke-width="1"/><path d="M4.8 5.3H12.3" stroke="#b0b2ae" stroke-width="1.1"/><path d="M4.8 7.3H12.3" stroke="#b0b2ae" stroke-width="1.1"/><path d="M4.8 9.3H12.3" stroke="#b0b2ae" stroke-width="1.1"/><path d="M4.800 11.300H9" stroke="#b0b2ae" stroke-width="1.100"/><rect x="9.500" y="9.500" width="12.200" height="12.200" fill="#fff" stroke="#888a85" stroke-width="1"/><path d="M11.8 12.3H19.3" stroke="#b0b2ae" stroke-width="1.1"/><path d="M11.8 14.3H19.3" stroke="#b0b2ae" stroke-width="1.1"/><path d="M11.8 16.3H19.3" stroke="#b0b2ae" stroke-width="1.1"/><path d="M11.800 18.300H16" stroke="#b0b2ae" stroke-width="1.100"/></svg>
<svg style="left:327px;top:53px;" width="24" height="24" viewBox="0 0 24 24"><rect x="2.500" y="3.200" width="16.500" height="17.800" rx="1.500" fill="#e3ae66" stroke="#9c6414" stroke-width="1"/><path d="M6 6.500v-2.500h2.500v-2.200a.8 .8 0 0 1 .8-.8h3.400a.8 .8 0 0 1 .8 .8v2.200h2.500v2.500z" fill="#e6e6e4" stroke="#6d6f6b" stroke-width=".9"/><rect x="9.800" y="9.500" width="11.800" height="12" fill="#fff" stroke="#888a85" stroke-width="1"/><path d="M12 12.5H19.5" stroke="#9a9c98" stroke-width="1.1"/><path d="M12 14.5H19.5" stroke="#9a9c98" stroke-width="1.1"/><path d="M12 16.5H19.5" stroke="#9a9c98" stroke-width="1.1"/><path d="M12 18.500H16.500" stroke="#9a9c98" stroke-width="1.100"/></svg>
<svg style="left:358px;top:63px;" width="5" height="3" viewBox="0 0 5 3"><path d="M0 0h5l-2.500 3z" fill="#000"/></svg>
<div style="left:370px;top:56px;width:1px;height:19px;background:#bdbdbd;"></div>
<svg style="left:379px;top:53px;" width="24" height="24" viewBox="0 0 24 24"><path d="M.5 23.300c7-.3 14-.8 22-1.300l-1.500-5h-11c-1.500 3.500-5 5.300-9.500 6.300z" fill="#e3262e"/><path d="M2 22.500l10-2" stroke="#f47a7f" stroke-width=".8"/><rect x="13.300" y="1.500" width="4.400" height="9" rx="2.200" fill="#e5b36a" stroke="#8f5902" stroke-width=".8"/><ellipse cx="15.500" cy="4.500" rx=".9" ry="1.500" fill="#8f5902"/><path d="M10 9h11v3h-11z" fill="#e0a040" stroke="#8f5902" stroke-width=".7"/><path d="M9.800 12h11.400l.3 2.500h-12z" fill="#2e3436"/><path d="M9.700 12.800h11.600" stroke="#eee" stroke-width=".9"/><path d="M9.500 14.500h12l.8 6.500c-4 .5-9 .5-13.300 0z" fill="#3a1a1c"/><path d="M11 16c1 2 0 3.500 1 5M14 15.500c.5 2 1 3 .5 5.500M17 15.500c1 2 .5 4 1.500 5.500M19.500 15.500l1 5" stroke="#e3262e" stroke-width="1.300" fill="none"/></svg>
<svg style="left:413px;top:53px;" width="24" height="24" viewBox="0 0 24 24"><text x="2" y="18.500" font-family="Liberation Serif,serif" font-style="italic" font-size="31" fill="url(#gA)" stroke="#555753" stroke-width=".7" textLength="17" lengthAdjust="spacingAndGlyphs">a</text><rect x="2" y="20.600" width="11.500" height="2" rx="1" fill="#555753"/><path d="M14.800 15l6.600 6.600M21.400 15l-6.600 6.600" stroke="#a40000" stroke-width="4" stroke-linecap="round"/><path d="M14.800 15l6.600 6.600M21.400 15l-6.600 6.600" stroke="#f01820" stroke-width="2.500" stroke-linecap="round"/><path d="M15 15.200l2.500 2.500" stroke="#ff9a9a" stroke-width=".8" stroke-linecap="round"/></svg>
<div style="left:444px;top:56px;width:1px;height:19px;background:#bdbdbd;"></div>
<svg style="left:452.5px;top:53px;" width="24" height="24" viewBox="0 0 24 24"><path d="M1.800 9.500l6.700-6v3.500c8 0 13.500 2 12.500 9.500-.4 2.500-1.600 3.500-3 3.500 1.800-4.500-.5-8-9.500-8v3.500z" fill="#f6f6f6" stroke="#e1e1e1" stroke-width="1"/></svg>
<svg style="left:484px;top:63px;" width="5" height="3" viewBox="0 0 5 3"><path d="M0 0h5l-2.500 3z" fill="#b5b5b5"/></svg>
<svg style="left:495.5px;top:53px;" width="24" height="24" viewBox="0 0 24 24"><path d="M22.200 9.500l-6.700-6v3.500c-8 0-13.500 2-12.500 9.500.4 2.500 1.600 3.500 3 3.500-1.800-4.500.5-8 9.500-8v3.500z" fill="#f6f6f6" stroke="#e1e1e1" stroke-width="1"/></svg>
<svg style="left:528px;top:63px;" width="5" height="3" viewBox="0 0 5 3"><path d="M0 0h5l-2.500 3z" fill="#b5b5b5"/></svg>
<div style="left:540px;top:56px;width:1px;height:19px;background:#bdbdbd;"></div>
<svg style="left:549px;top:53px;" width="24" height="24" viewBox="0 0 24 24"><path d="M14.500 14.500l7 7" stroke="#2e3436" stroke-width="3.400" stroke-linecap="round"/><circle cx="10.200" cy="9.200" r="7" fill="#f4f6fb" stroke="#3a4fb4" stroke-width="3"/><circle cx="10.200" cy="9.200" r="5.600" fill="none" stroke="#8fa0e0" stroke-width="1"/><path d="M21.300 3.200l2 2-14.500 14.800-3.300 1.300 1.300-3.300z" fill="#f6a038" stroke="#a85c06" stroke-width=".7"/><path d="M20 4.500l2 2" stroke="#c8c8c8" stroke-width="1.200"/><path d="M21.300 3.200l2 2-1 1-2-2z" fill="#ef2929"/><path d="M5.500 21.300l1.100-2.800 1.700 1.700z" fill="#2e3436"/></svg>
<svg style="left:582px;top:53px;" width="24" height="24" viewBox="0 0 24 24"><text x="1" y="10.600" font-family="DejaVu Sans,sans-serif" font-weight="bold" font-size="10.300" fill="#2e3436" textLength="22" lengthAdjust="spacingAndGlyphs">Abc</text><path d="M10.800 16.300l3.500 3.700 7.500-7" fill="none" stroke="#4e9a06" stroke-width="3.300"/><path d="M10.800 16.300l3.500 3.700 7.500-7" fill="none" stroke="#8ae234" stroke-width="1.500"/></svg>
<div style="left:614px;top:56px;width:1px;height:19px;background:#bdbdbd;"></div>
<svg style="left:622px;top:53px;" width="24" height="24" viewBox="0 0 24 24"><rect x="1.5" y="3.5" width="21.0" height="16.0" fill="#fff" stroke="#8e8e8e" stroke-width="1"/><path d="M8.5 3.5V19.5" stroke="#a8a8a8" stroke-width=".9"/><path d="M15.5 3.5V19.5" stroke="#a8a8a8" stroke-width=".9"/><path d="M1.5 7.5H22.5" stroke="#a8a8a8" stroke-width=".9"/><path d="M1.5 11.5H22.5" stroke="#a8a8a8" stroke-width=".9"/><path d="M1.5 15.5H22.5" stroke="#a8a8a8" stroke-width=".9"/><rect x="1" y="6.300" width="22" height="6.500" fill="#2b5aa6"/><path d="M2.800 9.500h5M9.500 9.500h5M16.200 9.500h5" stroke="#a6c3ea" stroke-width="3"/></svg>
<svg style="left:654px;top:63px;" width="5" height="3" viewBox="0 0 5 3"><path d="M0 0h5l-2.500 3z" fill="#000"/></svg>
<svg style="left:666px;top:53px;" width="24" height="24" viewBox="0 0 24 24"><rect x="1.5" y="3.5" width="21.0" height="16.0" fill="#fff" stroke="#8e8e8e" stroke-width="1"/><path d="M8.5 3.5V19.5" stroke="#a8a8a8" stroke-width=".9"/><path d="M15.5 3.5V19.5" stroke="#a8a8a8" stroke-width=".9"/><path d="M1.5 7.5H22.5" stroke="#a8a8a8" stroke-width=".9"/><path d="M1.5 11.5H22.5" stroke="#a8a8a8" stroke-width=".9"/><path d="M1.5 15.5H22.5" stroke="#a8a8a8" stroke-width=".9"/><rect x="7.200" y="2" width="9.600" height="19" fill="#2b5aa6"/><path d="M9.500 5.500h5M9.500 9.500h5M9.500 13.500h5M9.500 17.500h5" stroke="#a6c3ea" stroke-width="2.400"/></svg>
<svg style="left:698px;top:63px;" width="5" height="3" viewBox="0 0 5 3"><path d="M0 0h5l-2.500 3z" fill="#000"/></svg>
<div style="left:710px;top:56px;width:1px;height:19px;background:#bdbdbd;"></div>
<svg style="left:719px;top:53px;" width="24" height="24" viewBox="0 0 24 24"><path d="M4.7 3v12.100000000000001h-4.200l6 7.500 6-7.500h-4.200v-12.100000000000001z" fill="url(#gArrD)" stroke="url(#gArrDs)" stroke-width=".9"/><path d="M15.7 21v-12.5h-4.200l6-7.500 6 7.500h-4.200v12.5z" fill="url(#gArrU)" stroke="url(#gArrUs)" stroke-width=".9"/></svg>
<svg style="left:752px;top:53px;" width="24" height="24" viewBox="0 0 24 24"><circle cx="4" cy="3" r="1.600" fill="#fff" stroke="#3b6cb8" stroke-width="1.100"/><circle cx="4" cy="9" r="1.600" fill="#fff" stroke="#3b6cb8" stroke-width="1.100"/><circle cx="4" cy="15" r="1.600" fill="#fff" stroke="#3b6cb8" stroke-width="1.100"/><circle cx="4" cy="20.6" r="1.600" fill="#fff" stroke="#3b6cb8" stroke-width="1.100"/><path d="M13.799999999999999 2v12.2h-4.200l6 7.500 6-7.500h-4.200v-12.2z" fill="url(#gArrD)" stroke="url(#gArrDs)" stroke-width=".9"/></svg>
<svg style="left:785px;top:53px;" width="24" height="24" viewBox="0 0 24 24"><circle cx="4" cy="3" r="1.600" fill="#fff" stroke="#3b6cb8" stroke-width="1.100"/><circle cx="4" cy="9" r="1.600" fill="#fff" stroke="#3b6cb8" stroke-width="1.100"/><circle cx="4" cy="15" r="1.600" fill="#fff" stroke="#3b6cb8" stroke-width="1.100"/><circle cx="4" cy="20.6" r="1.600" fill="#fff" stroke="#3b6cb8" stroke-width="1.100"/><path d="M13.6 22v-12.5h-4.200l6-7.500 6 7.500h-4.200v12.5z" fill="url(#gArrU)" stroke="url(#gArrUs)" stroke-width=".9"/></svg>
<svg style="left:818px;top:53px;" width="24" height="24" viewBox="0 0 24 24"><rect x="4.500" y="0" width="14" height="6" fill="#d9d9d9" fill-opacity=".75"/><path d="M4.500 1h14M4.500 3h14M4.500 5h14" stroke="#fff" stroke-width=".8" stroke-dasharray="1 1"/><ellipse cx="12" cy="20.500" rx="7" ry="1.500" fill="#000" fill-opacity=".12"/><path d="M3 6.300h17l-7 8.700v5.300h-2.600v-5.300z" fill="url(#gFun)" stroke="#2a5db0" stroke-width="1.200" stroke-linejoin="round"/><path d="M1 15.100h22" stroke="#111" stroke-width="1" stroke-dasharray="1 1"/></svg>
<div style="left:850px;top:56px;width:1px;height:19px;background:#bdbdbd;"></div>
<svg style="left:859px;top:53px;" width="24" height="24" viewBox="0 0 24 24"><rect x=".5" y="2.500" width="23" height="18" rx="1.200" fill="#e3e3e1" stroke="#6d6f6b" stroke-width="1"/><rect x="2.700" y="4.700" width="18.600" height="13.600" fill="url(#gSun)" stroke="#3a2a12" stroke-width=".6"/><circle cx="7.500" cy="17.500" r="3" fill="#fff3b0"/><rect x="2.700" y="17" width="18.600" height="1.300" fill="#7a4a10"/><path d="M15.300 18v-6.500M15.300 13.500l-3.300-4.500M15.300 12l3.500-4.500M13.500 11l-2.500-.5M17 10l2.500 0M15.300 11.500l-.5-4" stroke="#1e1206" stroke-width="1" fill="none"/></svg>
<svg style="left:892px;top:53px;" width="24" height="24" viewBox="0 0 24 24"><ellipse cx="12" cy="22" rx="9" ry="1.300" fill="#000" fill-opacity=".15"/><circle cx="12" cy="11.700" r="10" fill="url(#gPie)"/><path d="M12 11.700h10a10 10 0 0 1-6 9.200z" fill="#4a7fc8"/><path d="M12 11.700l4 9.200a10 10 0 0 1-7.800.1z" fill="#6fb42c"/></svg>
<svg style="left:925px;top:53px;" width="24" height="24" viewBox="0 0 24 24"><rect x="1.500" y="1.500" width="21" height="21" fill="#fff" stroke="#8e8e8e" stroke-width="1"/><rect x="3.300" y="3.300" width="3.400" height="3.400" fill="#8a8a8a" stroke="#666" stroke-width=".5"/><rect x="8.300" y="3.300" width="12.500" height="3.400" fill="#8a8a8a" stroke="#666" stroke-width=".5"/><rect x="3.300" y="8.300" width="3.400" height="12.400" fill="#8a8a8a" stroke="#666" stroke-width=".5"/><path d="M9 18l3.500-3v2c3.500 0 4.500-1.500 4.500-5h-2l3.500-3.800 3.500 3.800h-2c0 5.500-2.500 8-7.500 8v2z" fill="#fcaf3e" stroke="#e0720a" stroke-width=".9"/></svg>
<div style="left:957px;top:56px;width:1px;height:19px;background:#bdbdbd;"></div>
<svg style="left:966px;top:53px;" width="24" height="24" viewBox="0 0 24 24"><text x="1.300" y="21.700" font-family="Liberation Serif,serif" font-weight="bold" font-size="29" fill="#16191a" textLength="21" lengthAdjust="spacingAndGlyphs">Ω</text></svg>
<svg style="left:999px;top:53px;" width="24" height="24" viewBox="0 0 24 24"><path d="M1 9.300h6.500M1 13.900h6.500M16.500 9.300h6.500M16.500 13.900h6.500" stroke="#80827e" stroke-width="1.500"/><path d="M2.200 8.200h4.600M2.200 15h4.600M17.200 8.200h4.600M17.200 15h4.600" stroke="#b8bab5" stroke-width=".8"/><path d="M6.500 9.300c1.500 0 2 1 3.500 1h4c1.500 0 2-1 3.500-1v4.600c-1.500 0-2-1-3.500-1h-4c-1.500 0-2 1-3.500 1z" fill="#d3d5d0" stroke="#555753" stroke-width="1.200"/></svg>
<svg style="left:1032px;top:53px;" width="24" height="24" viewBox="0 0 24 24"><path d="M3.300 3.700h17v11.500l-5.500 5.500h-11.500z" fill="url(#gNote)" stroke="#c4a000" stroke-width="1"/><path d="M20.300 15.200c-2 .8-4 .5-5.500 0 .5 1.500 .5 3.500 0 5.500z" fill="#fffbd0" stroke="#c4a000" stroke-width=".8"/></svg>
<svg style="left:1065px;top:53px;" width="24" height="24" viewBox="0 0 24 24"><rect x="2.500" y="1.700" width="19" height="21" rx=".8" fill="#fbfbfb" stroke="#888a85" stroke-width="1"/><rect x="5" y="4.300" width="14" height="2.400" fill="#1f4490"/><rect x="5" y="17.600" width="14" height="2.400" fill="#1f4490"/><path d="M5 9.300h14M5 11.700h14M5 14.100h8M5 16h5" stroke="#b5b5b5" stroke-width="1"/></svg>
<div style="left:1097px;top:56px;width:1px;height:19px;background:#bdbdbd;"></div>
<svg style="left:1106px;top:53px;" width="24" height="24" viewBox="0 0 24 24"><path d="M1.500 1.700h13l5 5v15.800h-18z" fill="#f4f4f4" stroke="#9a9a9a" stroke-width="1"/><path d="M4.500 4.500h9l3 3v12h-12z" fill="#fff" stroke="#c5c5c5" stroke-width=".8"/><path d="M14.500 1.700v5h5" fill="#e8e8e8" stroke="#9a9a9a" stroke-width=".9"/><rect x="12.500" y="11.500" width="8.500" height="5" fill="#f0f0f0" stroke="#7b7d79" stroke-width=".9"/><path d="M14 13.500h5.500" stroke="#b0b0b0"/><rect x="10" y="16" width="13.500" height="6.700" rx="1" fill="#d6d6d4" stroke="#6d6f6b" stroke-width="1"/><path d="M12.500 20.300h8.500" stroke="#555" stroke-width="1.100"/><path d="M12.500 18.300h3" stroke="#fff" stroke-width=".9"/></svg>
<svg style="left:1138px;top:53px;" width="24" height="24" viewBox="0 0 24 24"><rect x="1.500" y="1.700" width="21" height="20" fill="#fff" stroke="#555753" stroke-width="1.100"/><rect x="2" y="2.200" width="20" height="5" fill="#cfe0f5"/><rect x="2" y="2.200" width="6.500" height="19" fill="#cfe0f5"/><path d="M2 5l3-2.800M2 8.500l6.500-6.300M5 9l7-6.800M2 12l6.500-6M2 15.500l6.500-6M2 19l6.500-6M4 21l4.500-4.500M10 7.200l5.500-5M14 7.200l5.500-5M18 7.200l4-3.500" stroke="#fff" stroke-width="1"/><path d="M8.700 2.200v19M15.500 2.200v19M2 7.400h20M2 12.300h20M2 17h20" stroke="#c9c7b4" stroke-width=".9"/><rect x="9" y="7.700" width="6.500" height="4.800" fill="#8fb4e6" stroke="#3465a4" stroke-width=".9"/></svg>
<svg style="left:1170px;top:63px;" width="5" height="3" viewBox="0 0 5 3"><path d="M0 0h5l-2.500 3z" fill="#000"/></svg>
<svg style="left:1183px;top:53px;" width="24" height="24" viewBox="0 0 24 24"><rect x="2.500" y="2.500" width="19" height="19.300" rx="1" fill="url(#gGray)" stroke="#8e908c" stroke-width="1"/><path d="M3 3h18v3.300h-18z" fill="#2b5aa6"/><path d="M3 4h18" stroke="#6d93cf" stroke-width=".8"/><path d="M2.500 12.500h19" stroke="#f57900" stroke-width="1.200" stroke-dasharray="1.600 .9"/></svg>
<div style="left:1215px;top:56px;width:1px;height:19px;background:#bdbdbd;"></div>
<svg style="left:1224px;top:53px;" width="24" height="24" viewBox="0 0 24 24"><rect x="1" y="1" width="22" height="22" rx="3" fill="#84a7e0" stroke="#3f72c4" stroke-width="1.200"/><rect x="4.800" y="5" width="5" height="5" fill="#fff" stroke="#1f3f7a" stroke-width="1"/><circle cx="16.500" cy="7.500" r="2.700" fill="#fff" stroke="#1f3f7a" stroke-width="1"/><circle cx="7.300" cy="16.500" r="2.700" fill="#fff" stroke="#1f3f7a" stroke-width="1"/><path d="M14 19.300v-5.500l5.500 5.500z" fill="#fff" stroke="#1f3f7a" stroke-width="1"/></svg>
<div style="left:12px;top:92px;width:120px;height:24px;background:#fff;border:1px solid #abadb3;"></div>
<span class="t" style="left:16px;top:98.54px;font-size:12px;line-height:12px;color:#000;letter-spacing:-0.242px;">Liberation Sans</span>
<div style="left:113px;top:94px;width:17px;height:20px;background:#e1e1e1;border:1px solid #adadad;"></div>
<svg style="left:116px;top:100px;" width="11" height="8" viewBox="0 0 11 8"><path d="M1.5 1.5l4 4 4-4" fill="none" stroke="#444" stroke-width="1.2"/></svg>
<div style="left:140px;top:92px;width:46px;height:24px;background:#fff;border:1px solid #abadb3;"></div>
<span class="t" style="left:144px;top:98.54px;font-size:12px;line-height:12px;color:#000;letter-spacing:-0.759px;">10</span>
<div style="left:167px;top:94px;width:17px;height:20px;background:#e1e1e1;border:1px solid #adadad;"></div>
<svg style="left:170px;top:100px;" width="11" height="8" viewBox="0 0 11 8"><path d="M1.5 1.5l4 4 4-4" fill="none" stroke="#444" stroke-width="1.2"/></svg>
<div style="left:189px;top:95px;width:1px;height:19px;background:#bdbdbd;"></div>
<svg style="left:198px;top:92px;" width="24" height="24" viewBox="0 0 24 24"><text x="3.200" y="19" font-family="DejaVu Sans,sans-serif" font-weight="bold" font-size="25" fill="url(#gA)" stroke="#4a4c49" stroke-width="1" textLength="18" lengthAdjust="spacingAndGlyphs">a</text></svg>
<svg style="left:231px;top:92px;" width="24" height="24" viewBox="0 0 24 24"><text x="4.300" y="19" font-family="Liberation Serif,serif" font-style="italic" font-weight="bold" font-size="30" fill="url(#gA)" stroke="#4a4c49" stroke-width=".4" textLength="17.500" lengthAdjust="spacingAndGlyphs">a</text></svg>
<svg style="left:264.5px;top:92px;" width="24" height="24" viewBox="0 0 24 24"><text x="3.800" y="18.300" font-family="DejaVu Sans,sans-serif" font-size="25.500" fill="url(#gA)" stroke="#3a3c39" stroke-width=".7">a</text><rect x="4.500" y="20.200" width="15" height="2.400" rx="1" fill="#4a4c49"/></svg>
<div style="left:296px;top:95px;width:1px;height:19px;background:#bdbdbd;"></div>
<svg style="left:304px;top:92px;" width="24" height="24" viewBox="0 0 24 24"><text x="3.600" y="15.300" font-family="DejaVu Sans,sans-serif" font-size="25.500" fill="url(#gBlueA)" stroke="#2f62b0" stroke-width="1">a</text><rect x="0" y="18" width="24" height="5.800" fill="#d4151c"/></svg>
<svg style="left:336px;top:102px;" width="5" height="3" viewBox="0 0 5 3"><path d="M0 0h5l-2.500 3z" fill="#000"/></svg>
<svg style="left:348px;top:92px;" width="24" height="24" viewBox="0 0 24 24"><rect x="2.600" y="1.600" width="18.800" height="14.800" rx="1.800" fill="#e4ecf8" stroke="#3c6eb4" stroke-width="1.200"/><path d="M6.300 6.400h11.400M6.300 11.500h11.400" stroke="#3a3c39" stroke-width="2.700" stroke-linecap="round"/><rect x="0" y="18" width="24" height="5.800" fill="#fff000"/></svg>
<svg style="left:380px;top:102px;" width="5" height="3" viewBox="0 0 5 3"><path d="M0 0h5l-2.500 3z" fill="#000"/></svg>
<div style="left:392px;top:95px;width:1px;height:19px;background:#bdbdbd;"></div>
<svg style="left:401px;top:92px;" width="24" height="24" viewBox="0 0 24 24"><rect x="1.9" y="3.25" width="15.1" height="2.7" rx="1.35" fill="url(#gBar)"/><rect x="2.5" y="3.95" width="13.9" height="1.30" rx=".6" fill="#5c5e5a"/><rect x="1.9" y="8.15" width="20.0" height="2.7" rx="1.35" fill="url(#gBar)"/><rect x="2.5" y="8.85" width="18.8" height="1.30" rx=".6" fill="#5c5e5a"/><rect x="1.9" y="13.15" width="17.1" height="2.7" rx="1.35" fill="url(#gBar)"/><rect x="2.5" y="13.85" width="15.900000000000002" height="1.30" rx=".6" fill="#5c5e5a"/><rect x="1.9" y="18.15" width="12.1" height="2.7" rx="1.35" fill="url(#gBar)"/><rect x="2.5" y="18.85" width="10.9" height="1.30" rx=".6" fill="#5c5e5a"/></svg>
<svg style="left:434px;top:92px;" width="24" height="24" viewBox="0 0 24 24"><rect x="5.3" y="3.25" width="13.7" height="2.7" rx="1.35" fill="url(#gBar)"/><rect x="5.8999999999999995" y="3.95" width="12.5" height="1.30" rx=".6" fill="#5c5e5a"/><rect x="2" y="8.15" width="20" height="2.7" rx="1.35" fill="url(#gBar)"/><rect x="2.6" y="8.85" width="18.8" height="1.30" rx=".6" fill="#5c5e5a"/><rect x="4" y="13.15" width="16" height="2.7" rx="1.35" fill="url(#gBar)"/><rect x="4.6" y="13.85" width="14.8" height="1.30" rx=".6" fill="#5c5e5a"/><rect x="6" y="18.15" width="12" height="2.7" rx="1.35" fill="url(#gBar)"/><rect x="6.6" y="18.85" width="10.8" height="1.30" rx=".6" fill="#5c5e5a"/></svg>
<svg style="left:467px;top:92px;" width="24" height="24" viewBox="0 0 24 24"><rect x="7.3" y="3.25" width="14.7" height="2.7" rx="1.35" fill="url(#gBar)"/><rect x="7.8999999999999995" y="3.95" width="13.5" height="1.30" rx=".6" fill="#5c5e5a"/><rect x="2" y="8.15" width="20" height="2.7" rx="1.35" fill="url(#gBar)"/><rect x="2.6" y="8.85" width="18.8" height="1.30" rx=".6" fill="#5c5e5a"/><rect x="5" y="13.15" width="17" height="2.7" rx="1.35" fill="url(#gBar)"/><rect x="5.6" y="13.85" width="15.8" height="1.30" rx=".6" fill="#5c5e5a"/><rect x="10" y="18.15" width="12" height="2.7" rx="1.35" fill="url(#gBar)"/><rect x="10.6" y="18.85" width="10.8" height="1.30" rx=".6" fill="#5c5e5a"/></svg>
<div style="left:499px;top:95px;width:1px;height:19px;background:#bdbdbd;"></div>
<svg style="left:508px;top:92px;" width="24" height="24" viewBox="0 0 24 24"><rect x="1" y="3.25" width="20" height="2.7" rx="1.35" fill="url(#gBar)"/><rect x="1.6" y="3.95" width="18.8" height="1.30" rx=".6" fill="#5c5e5a"/><rect x="1" y="10.15" width="15.7" height="2.7" rx="1.35" fill="url(#gBar)"/><rect x="1.6" y="10.85" width="14.5" height="1.30" rx=".6" fill="#5c5e5a"/><rect x="1" y="17.25" width="8" height="2.7" rx="1.35" fill="url(#gBar)"/><rect x="1.6" y="17.95" width="6.8" height="1.30" rx=".6" fill="#5c5e5a"/><path d="M17.500 9.800c5-.5 7 2.500 5.500 5.500-1 2-3.500 2.800-6 2.800v2.800l-5.500-4.400 5.500-4.400v2.800c3 0 4.300-1.300 3.500-2.800-.5-1-1.500-1.300-3-1.300z" fill="#fcaf3e" stroke="#d96a08" stroke-width=".9"/></svg>
<svg style="left:541px;top:92px;" width="24" height="24" viewBox="0 0 24 24"><rect x="1.5" y="3.5" width="21.0" height="16.0" fill="#fff" stroke="#8e8e8e" stroke-width="1"/><path d="M8.5 3.5V19.5" stroke="#a8a8a8" stroke-width=".9"/><path d="M15.5 3.5V19.5" stroke="#a8a8a8" stroke-width=".9"/><path d="M1.5 8.8H22.5" stroke="#a8a8a8" stroke-width=".9"/><path d="M1.5 14.2H22.5" stroke="#a8a8a8" stroke-width=".9"/><rect x="1.500" y="8.800" width="21" height="5.500" fill="#b5cdf0" stroke="#7f9fd0" stroke-width=".7"/><path d="M7 11.500h10" stroke="#1f4490" stroke-width="1.500"/><path d="M8.500 8.800l-4 2.700 4 2.700zM15.500 8.800l4 2.700-4 2.700z" fill="#1f4490"/></svg>
<div style="left:573px;top:95px;width:1px;height:19px;background:#bdbdbd;"></div>
<svg style="left:582px;top:92px;" width="24" height="24" viewBox="0 0 24 24"><rect x="2.500" y="2.500" width="19" height="19" rx="2.800" fill="url(#gGray)" stroke="#b5b5b3" stroke-width="1"/><path d="M6 6.5h12M6 9.5h6" stroke="#9a9c98" stroke-width="1"/></svg>
<svg style="left:615px;top:92px;" width="24" height="24" viewBox="0 0 24 24"><rect x="2.500" y="2.500" width="19" height="19" rx="2.800" fill="url(#gGray)" stroke="#b5b5b3" stroke-width="1"/><path d="M6 10.5h12M6 13.5h6" stroke="#9a9c98" stroke-width="1"/></svg>
<svg style="left:648px;top:92px;" width="24" height="24" viewBox="0 0 24 24"><rect x="2.500" y="2.500" width="19" height="19" rx="2.800" fill="url(#gGray)" stroke="#b5b5b3" stroke-width="1"/><path d="M6 13.8h12M6 16.7h6" stroke="#9a9c98" stroke-width="1"/></svg>
<div style="left:680px;top:95px;width:1px;height:19px;background:#bdbdbd;"></div>
<svg style="left:687px;top:92px;" width="24" height="24" viewBox="0 0 24 24"><path d="M3 6h21v10h-21z" fill="#7eb85a" stroke="#5a9636" stroke-width=".8"/><path d="M1 4h21v10h-21z" fill="#98cf72" stroke="#5a9636" stroke-width=".9"/><ellipse cx="11" cy="8.500" rx="2.800" ry="3.300" fill="#6aa844"/><circle cx="4" cy="7" r=".9" fill="#6aa844"/><circle cx="19" cy="7" r=".9" fill="#6aa844"/><circle cx="15.500" cy="14" r="3.900" fill="#e4d267" stroke="#9f8c27" stroke-width=".9"/><circle cx="13" cy="18.300" r="3.900" fill="#e4d267" stroke="#9f8c27" stroke-width=".9"/><circle cx="15.500" cy="14" r="2.200" fill="#f1e696"/><circle cx="13" cy="18.300" r="2.200" fill="#f1e696"/></svg>
<svg style="left:720px;top:102px;" width="5" height="3" viewBox="0 0 5 3"><path d="M0 0h5l-2.500 3z" fill="#000"/></svg>
<svg style="left:733px;top:92px;" width="24" height="24" viewBox="0 0 24 24"><text x="2" y="21" font-family="Liberation Sans,sans-serif" font-size="24" fill="#2e3436" textLength="20.700" lengthAdjust="spacingAndGlyphs">%</text></svg>
<svg style="left:765px;top:92px;" width="24" height="24" viewBox="0 0 24 24"><text x=".8" y="17.200" font-family="DejaVu Sans,sans-serif" font-weight="bold" font-size="15.300" fill="#2e3436" textLength="23" lengthAdjust="spacingAndGlyphs">0.0</text></svg>
<svg style="left:799px;top:92px;" width="24" height="24" viewBox="0 0 24 24"><rect x="2.800" y="4.200" width="18.800" height="17" rx=".8" fill="#f1f1ef" stroke="#b36f12" stroke-width="2"/><rect x="4.800" y="8" width="14.800" height="11.200" fill="#e6e6e4"/><path d="M4.500 8h15.400" stroke="#d0d0ce" stroke-width=".8"/><rect x="7.300" y="1.300" width="2.200" height="6.500" rx="1.100" fill="#f4f4f4" stroke="#888a85" stroke-width=".7"/><rect x="14.500" y="1.300" width="2.200" height="6.500" rx="1.100" fill="#f4f4f4" stroke="#888a85" stroke-width=".7"/><text x="9.300" y="16.800" font-family="Liberation Sans,sans-serif" font-size="8.500" fill="#666">3</text><rect x="16.500" y="16" width="2.500" height="2.500" fill="#bbb"/></svg>
<div style="left:831px;top:95px;width:1px;height:19px;background:#bdbdbd;"></div>
<svg style="left:839px;top:92px;" width="24" height="24" viewBox="0 0 24 24"><path d="M5.300 1.200h4.400v4.100h4.100v4.400h-4.100v4.100h-4.400v-4.100h-4.100v-4.400h4.100z" fill="#7ed321" stroke="#4e9a06" stroke-width="1"/><text x="15.300" y="12" font-family="Liberation Sans,sans-serif" font-size="9.800" fill="#2e3436" textLength="7.700" lengthAdjust="spacingAndGlyphs">.0</text><text x="9.300" y="21.900" font-family="Liberation Sans,sans-serif" font-size="9.800" fill="#2e3436" textLength="13.700" lengthAdjust="spacingAndGlyphs">.00</text></svg>
<svg style="left:872px;top:92px;" width="24" height="24" viewBox="0 0 24 24"><text x="9.500" y="12" font-family="Liberation Sans,sans-serif" font-size="9.800" fill="#2e3436" textLength="13.700" lengthAdjust="spacingAndGlyphs">.00</text><rect x="1.200" y="16.300" width="12.600" height="4.400" rx="1" fill="#e01b24" stroke="#a40000" stroke-width="1"/><text x="15.700" y="21.900" font-family="Liberation Sans,sans-serif" font-size="9.800" fill="#2e3436" textLength="7.700" lengthAdjust="spacingAndGlyphs">.0</text></svg>
<div style="left:905px;top:95px;width:1px;height:19px;background:#bdbdbd;"></div>
<svg style="left:914.5px;top:92px;" width="24" height="24" viewBox="0 0 24 24"><rect x="0.7" y="3.25" width="22.7" height="2.7" rx="1.35" fill="url(#gBar)"/><rect x="1.2999999999999998" y="3.95" width="21.5" height="1.30" rx=".6" fill="#5c5e5a"/><rect x="8.9" y="8.15" width="14.499999999999998" height="2.7" rx="1.35" fill="url(#gBar)"/><rect x="9.5" y="8.85" width="13.299999999999999" height="1.30" rx=".6" fill="#5c5e5a"/><rect x="8.9" y="13.15" width="14.499999999999998" height="2.7" rx="1.35" fill="url(#gBar)"/><rect x="9.5" y="13.85" width="13.299999999999999" height="1.30" rx=".6" fill="#5c5e5a"/><rect x="0.7" y="18.15" width="22.7" height="2.7" rx="1.35" fill="url(#gBar)"/><rect x="1.2999999999999998" y="18.85" width="21.5" height="1.30" rx=".6" fill="#5c5e5a"/><path d="M1.800 8.300l4 3.800-4 3.800" fill="none" stroke="#e8760a" stroke-width="2.200"/><path d="M1.800 8.300l4 3.800-4 3.800" fill="none" stroke="#fcaf3e" stroke-width=".8"/></svg>
<svg style="left:947.5px;top:92px;" width="24" height="24" viewBox="0 0 24 24"><rect x="0.7" y="3.25" width="22.7" height="2.7" rx="1.35" fill="url(#gBar)"/><rect x="1.2999999999999998" y="3.95" width="21.5" height="1.30" rx=".6" fill="#5c5e5a"/><rect x="8.9" y="8.15" width="14.499999999999998" height="2.7" rx="1.35" fill="url(#gBar)"/><rect x="9.5" y="8.85" width="13.299999999999999" height="1.30" rx=".6" fill="#5c5e5a"/><rect x="8.9" y="13.15" width="14.499999999999998" height="2.7" rx="1.35" fill="url(#gBar)"/><rect x="9.5" y="13.85" width="13.299999999999999" height="1.30" rx=".6" fill="#5c5e5a"/><rect x="0.7" y="18.15" width="22.7" height="2.7" rx="1.35" fill="url(#gBar)"/><rect x="1.2999999999999998" y="18.85" width="21.5" height="1.30" rx=".6" fill="#5c5e5a"/><path d="M6 8.300l-4 3.800 4 3.800" fill="none" stroke="#e8760a" stroke-width="2.200"/><path d="M6 8.300l-4 3.800 4 3.800" fill="none" stroke="#fcaf3e" stroke-width=".8"/></svg>
<div style="left:979px;top:95px;width:1px;height:19px;background:#bdbdbd;"></div>
<svg style="left:987px;top:92px;" width="24" height="24" viewBox="0 0 24 24"><ellipse cx="12" cy="21.500" rx="11.500" ry="1.300" fill="#000" fill-opacity=".18"/><rect x="3.500" y="3.500" width="18" height="17.300" fill="#e4e6e2" stroke="#8e908c" stroke-width="1"/><path d="M4 12.500h9M12.500 4v9" stroke="#777" stroke-width="1" stroke-dasharray="1 1.300"/><rect x="12.500" y="12.500" width="9" height="8.300" fill="#ecedeb" stroke="#3c6eb4" stroke-width="1.100"/></svg>
<svg style="left:1019px;top:102px;" width="5" height="3" viewBox="0 0 5 3"><path d="M0 0h5l-2.500 3z" fill="#000"/></svg>
<svg style="left:1031px;top:92px;" width="24" height="24" viewBox="0 0 24 24"><path d="M2.700 21.500v-19.700h18" fill="none" stroke="#1f3f6e" stroke-width="2.600"/><path d="M9.500 22v-13.500h12" fill="none" stroke="#111" stroke-width="1.300" stroke-dasharray="2 1.400"/><path d="M15.800 21.500v-5.500h5" fill="none" stroke="#222" stroke-width="1.200"/><rect x="18" y="0" width="6" height="24" fill="#f3f3f3" fill-opacity=".6"/></svg>
<svg style="left:1063px;top:102px;" width="5" height="3" viewBox="0 0 5 3"><path d="M0 0h5l-2.500 3z" fill="#000"/></svg>
<svg style="left:1075px;top:92px;" width="24" height="24" viewBox="0 0 24 24"><rect x="3.800" y="2.500" width="16.700" height="12.700" fill="#fff" stroke="#2a2a2a" stroke-width="3"/><rect x="5.500" y="4.200" width="13.300" height="9.300" fill="none" stroke="#777" stroke-width=".6"/><rect x="0" y="18" width="24" height="5.800" fill="#000080"/></svg>
<svg style="left:1107px;top:102px;" width="5" height="3" viewBox="0 0 5 3"><path d="M0 0h5l-2.500 3z" fill="#000"/></svg>
<div style="left:1119px;top:95px;width:1px;height:19px;background:#bdbdbd;"></div>
<svg style="left:1127px;top:92px;" width="24" height="24" viewBox="0 0 24 24"><rect x="1.500" y="1.500" width="21" height="20.300" rx=".8" fill="#f1f1ef" stroke="#9a9c98" stroke-width="1"/><rect x="3.500" y="3.500" width="17" height="4.200" fill="#c9f0b4" stroke="#4e9a06" stroke-width="1"/><rect x="3.500" y="9.600" width="17" height="4.200" fill="#fde0b4" stroke="#f57900" stroke-width="1"/><rect x="3.500" y="15.700" width="17" height="4.200" fill="#f9b8b8" stroke="#e01b24" stroke-width="1"/><path d="M15.500 5.600h4M15.500 11.700h4M15.500 17.800h4" stroke="#555753" stroke-width="1.200"/></svg>
<svg style="left:1159px;top:102px;" width="5" height="3" viewBox="0 0 5 3"><path d="M0 0h5l-2.500 3z" fill="#000"/></svg>
</div>
<div class="sec" id="sidebar">
<div style="left:1581px;top:124px;width:7px;height:854px;background:#f4f4f4;border-left:1px solid #b0b0b0;border-right:1px solid #b0b0b0;"></div>
<div style="left:1581px;top:515px;width:7px;height:73px;background:#6b6b6b;"></div>
<svg style="left:1582px;top:546px;" width="6" height="11" viewBox="0 0 6 11"><path d="M.5 .8l4.800 4.700-4.800 4.700z" fill="#f4f4f4"/></svg>
<div style="left:1588px;top:124px;width:332px;height:854px;background:#f0f0f0;"></div>
<div style="left:1581px;top:977px;width:339px;height:1px;background:#c4c4c4;"></div>
<div style="left:1592px;top:128px;width:288px;height:846px;border:1px solid #e2e2e2;border-bottom:none;"></div>
<div style="left:1593px;top:155px;width:286px;height:1px;background:#dcdcdc;"></div>
<span class="t" style="left:1603px;top:136.54px;font-size:12px;line-height:12px;color:#000;letter-spacing:-0.284px;font-weight:700;">Formatvorlagen</span>
<svg style="left:1865px;top:135px;" width="10" height="10" viewBox="0 0 10 10"><path d="M1.500 1.500l7 7M8.500 1.500l-7 7" stroke="#333" stroke-width="2"/></svg>
<div style="left:1596px;top:159px;width:25px;height:26px;background:#c5ddf3;border:1px solid #92c4f0;"></div>
<svg style="left:1598px;top:162px;" width="20" height="20" viewBox="0 0 20 20"><circle cx="10" cy="10" r="7.900" fill="#e9e9e7" stroke="#8e908c" stroke-width="1.200"/><rect x="6.300" y="6.300" width="7.400" height="7.400" fill="#fff"/><path d="M4.500 7.200h11M4.500 12.800h11M7 5v10M13 5v10" stroke="#4a9a0a" stroke-width="1.700"/><rect x="7.700" y="7.900" width="4.600" height="4.200" fill="#fff"/></svg>
<svg style="left:1623px;top:162px;" width="20" height="20" viewBox="0 0 20 20"><circle cx="10" cy="10" r="7.900" fill="#f4f4f4" stroke="#8e908c" stroke-width="1.200"/><path d="M6.200 4.800h4.800l3 3v7.400h-7.800z" fill="#4a4a4a"/><path d="M8.200 7.600h2.300l1.600 1.600v4h-3.900z" fill="#f4f4f4"/></svg>
<svg style="left:1803px;top:162px;" width="20" height="20" viewBox="0 0 20 20"><path d="M5.500 5.500l9.500 4.500-4.500 9-9-4.500z" fill="#f8f8f8" stroke="#555753" stroke-width="1.100"/><path d="M4 8c-1.500-5 4-7 5.500-1.500" fill="none" stroke="#555753" stroke-width="1.200"/><circle cx="9" cy="9.500" r="1.700" fill="#666" stroke="#444" stroke-width=".6"/><path d="M14.500 9.200c3.500-1.500 4.500 0 4 7" fill="none" stroke="#5a7fd0" stroke-width="1.800"/></svg>
<svg style="left:1830px;top:165px;" width="17" height="13" viewBox="0 0 17 13"><text x="0" y="10.500" font-family="DejaVu Sans,sans-serif" font-weight="bold" font-size="10.500" fill="#3a3a3a">¶</text><path d="M8.500 2.500h7M8.500 5h7M8.500 7.500h7M8.500 10h5.500" stroke="#555" stroke-width="1"/></svg>
<div style="left:1855px;top:164px;width:16px;height:16px;background:#23262b;"></div>
<svg style="left:1855px;top:165px;" width="17" height="13" viewBox="0 0 17 13"><text x="1" y="10.500" font-family="DejaVu Sans,sans-serif" font-weight="bold" font-size="10.500" fill="#fff">¶</text><path d="M9 2.500h6M9 5h6M9 7.500h6M9 10h6" stroke="#fff" stroke-width="1.200"/></svg>
<div style="left:1596px;top:189px;width:280px;height:731px;background:#fff;border:1px solid #828790;"></div>
<div style="left:1597px;top:190px;width:278px;height:32px;background:#c1cedd;"></div>
<svg style="left:1603px;top:201px;" width="9" height="9" viewBox="0 0 9 9"><rect x=".5" y=".5" width="8" height="8" rx="1" fill="#fff" stroke="#9a9a9a"/><path d="M2 4.500h5" stroke="#2a3e8c" stroke-width="1"/></svg>
<span class="t" style="left:1615px;top:200.84px;font-size:12px;line-height:12px;color:#fff;letter-spacing:-0.243px;">Standard</span>
<svg style="left:1615px;top:232.5px;" width="9" height="9" viewBox="0 0 9 9"><rect x=".5" y=".5" width="8" height="8" rx="1" fill="#fff" stroke="#9a9a9a"/><path d="M2 4.500h5" stroke="#2a3e8c" stroke-width="1"/><path d="M4.500 2v5" stroke="#2a3e8c" stroke-width="1"/></svg>
<span class="t" style="left:1627px;top:232.84px;font-size:12px;line-height:12px;color:#000;letter-spacing:0.062px;">Accent</span>
<svg style="left:1615px;top:264.5px;" width="9" height="9" viewBox="0 0 9 9"><rect x=".5" y=".5" width="8" height="8" rx="1" fill="#fff" stroke="#9a9a9a"/><path d="M2 4.500h5" stroke="#2a3e8c" stroke-width="1"/><path d="M4.500 2v5" stroke="#2a3e8c" stroke-width="1"/></svg>
<span class="t" style="left:1627px;top:264.84px;font-size:12px;line-height:12px;color:#000;letter-spacing:0.216px;">Heading</span>
<svg style="left:1615px;top:296.5px;" width="9" height="9" viewBox="0 0 9 9"><rect x=".5" y=".5" width="8" height="8" rx="1" fill="#fff" stroke="#9a9a9a"/><path d="M2 4.500h5" stroke="#2a3e8c" stroke-width="1"/><path d="M4.500 2v5" stroke="#2a3e8c" stroke-width="1"/></svg>
<span class="t" style="left:1627px;top:296.84px;font-size:12px;line-height:12px;color:#000;letter-spacing:-0.406px;">Status</span>
<svg style="left:1615px;top:328.5px;" width="9" height="9" viewBox="0 0 9 9"><rect x=".5" y=".5" width="8" height="8" rx="1" fill="#fff" stroke="#9a9a9a"/><path d="M2 4.500h5" stroke="#2a3e8c" stroke-width="1"/><path d="M4.500 2v5" stroke="#2a3e8c" stroke-width="1"/></svg>
<span class="t" style="left:1627px;top:328.84px;font-size:12px;line-height:12px;color:#000;letter-spacing:0.328px;">Text</span>
<div style="left:1596px;top:928px;width:13px;height:13px;background:#fff;border:1px solid #333;"></div>
<svg style="left:1597px;top:929px;" width="11" height="11" viewBox="0 0 11 11"><path d="M1.500 5.500l3 3 5-7" fill="none" stroke="#222" stroke-width="1.300"/></svg>
<span class="t" style="left:1613px;top:929.54px;font-size:12px;line-height:12px;color:#000;letter-spacing:-0.191px;">Vorschauen anzeigen</span>
<div style="left:1596px;top:947px;width:280px;height:24px;background:#fff;border:1px solid #8a8d93;"></div>
<span class="t" style="left:1598px;top:954.14px;font-size:12px;line-height:12px;color:#000;letter-spacing:-0.062px;">Hierarchisch</span>
<div style="left:1858px;top:949px;width:17px;height:20px;background:#e1e1e1;border:1px solid #adadad;"></div>
<svg style="left:1861px;top:955px;" width="11" height="8" viewBox="0 0 11 8"><path d="M1.500 1.500l4 4 4-4" fill="none" stroke="#444" stroke-width="1.200"/></svg>
<svg style="left:1895px;top:138px;" width="12" height="12" viewBox="0 0 12 12"><path d="M1 2.500h7M1 5.500h7M1 8.500h5" stroke="#1b2a4a" stroke-width="1"/><path d="M5.500 8.500h5.500l-2.750 3z" fill="#1b2a4a"/></svg>
<div style="left:1889px;top:163px;width:23px;height:1px;background:#dcdcdc;"></div>
<svg style="left:1887px;top:170px;" width="26" height="26" viewBox="0 0 26 26"><g transform="rotate(45 13 13)" fill="#f7f7f7" stroke="#9a9c98" stroke-width="1" stroke-linejoin="round"><path d="M6.500 11.200h13v3.600h-13z"/><path d="M8 10.400a4.700 4.700 0 0 0-8.200-.9l3.800 1.700v3.600l-3.800 1.700a4.700 4.700 0 0 0 8.200-.9c.5-1.700 .5-3.500 0-5.200z"/><path d="M18 10.400a4.700 4.700 0 0 1 8.200-.9l-3.800 1.700v3.600l3.800 1.700a4.700 4.700 0 0 1-8.200-.9c-.5-1.700-.5-3.500 0-5.200z"/><path d="M7.600 11.700h10.800v2.600h-10.800z" stroke="none"/></g></svg>
<div style="left:1884px;top:202px;width:32px;height:32px;background:#f7f7f7;border:1px solid #c2c2c2;border-radius:4px;"></div>
<svg style="left:1886px;top:204px;" width="28" height="28" viewBox="0 0 28 28"><text x="5" y="21" font-family="Liberation Serif,serif" font-weight="bold" font-size="26" fill="#3a3c3b" stroke="#3a3c3b" stroke-width=".8" textLength="18.500" lengthAdjust="spacingAndGlyphs">T</text><path d="M2 25.500v-16.500l22 16.500z" fill="#6fc040" stroke="#3f8f1f" stroke-width="1"/><path d="M5.500 22.500v-7l9 7z" fill="#a9de8a" stroke="#d4f0c4" stroke-width=".6"/><path d="M4 24h16" stroke="#c4ebb0" stroke-width=".8" stroke-dasharray="1 1"/></svg>
<svg style="left:1888px;top:240px;" width="24" height="24" viewBox="0 0 24 24"><path d="M8.500 6l3.500-4 3.500 4" fill="none" stroke="#777" stroke-width="1"/><rect x="1.500" y="6.500" width="21" height="14" rx="2" fill="#e9a33a" stroke="#a86a10" stroke-width="1.300"/><rect x="3.800" y="8.800" width="16.400" height="9.400" fill="#5f7fb0"/><rect x="3.800" y="12.500" width="16.400" height="5.700" fill="#f6b73c"/><circle cx="8.500" cy="17.500" r="2" fill="#fff0a0"/><path d="M14 18v-6.500M14 14l-3-3M14 13.500l3-3.500M14 12l-.5-2.500" stroke="#2a1a05" stroke-width="1"/></svg>
<svg style="left:1888px;top:276px;" width="24" height="24" viewBox="0 0 24 24"><circle cx="12" cy="12" r="10.500" fill="#fafafa" stroke="#a8a8a6" stroke-width="1.800"/><circle cx="12" cy="12" r="8.300" fill="none" stroke="#d8d8d6" stroke-width="1"/><path d="M6.500 6l8 4.500-4 3z" fill="#e0243a"/><path d="M17.500 18l-7-4.500 4-3z" fill="#4a78d0"/></svg>
<svg style="left:1887px;top:309px;" width="28" height="28" viewBox="0 0 28 28"><text x="3.500" y="23" font-family="Liberation Serif,serif" font-style="italic" font-weight="bold" font-size="18" fill="#9a4aa6" stroke="#6a2c78" stroke-width=".6" letter-spacing="-1.500" textLength="18.500" lengthAdjust="spacingAndGlyphs">fx</text><path d="M13 3.500l1 2 2.200.3-1.600 1.500.4 2.200-2-1.100-2 1.100.4-2.200-1.600-1.500 2.200-.3z" fill="#f0d23c" stroke="#c4a000" stroke-width=".4"/><path d="M20.500 2.500l1.100 2.200 2.400.4-1.700 1.700.4 2.400-2.200-1.200-2.200 1.200.4-2.400-1.700-1.700 2.400-.4z" fill="#f0d23c" stroke="#c4a000" stroke-width=".4"/><circle cx="6" cy="9.500" r="1.200" fill="#f0d23c"/><ellipse cx="13" cy="25" rx="8" ry="1" fill="#000" fill-opacity=".12"/></svg>
</div>
<div class="sec" id="bottom-bars">
<div style="left:0px;top:945px;width:1581px;height:33px;background:#f0f0f0;"></div>
<svg style="left:3px;top:948px;" width="9" height="10" viewBox="0 0 9 10"><path d="M7 1.500l-4 3.500 4 3.500" fill="none" stroke="#404040" stroke-width="1.800"/></svg>
<div style="left:16px;top:946px;width:722px;height:15px;background:#cdcdcd;"></div>
<svg style="left:1545px;top:949px;" width="9" height="10" viewBox="0 0 9 10"><path d="M2 1.500l4 3.500-4 3.500" fill="none" stroke="#404040" stroke-width="1.800"/></svg>
<div style="left:1559px;top:945px;width:6px;height:17px;background:#a0a0a0;"></div>
<div style="left:1561px;top:949px;width:1px;height:9px;background:#000;"></div>
<svg style="left:10px;top:966px;" width="9" height="10" viewBox="0 0 9 10"><path d="M7.500 1v8l-5-4z" fill="#a8a8a8"/><rect x="1" y="1" width="1.300" height="8" fill="#a8a8a8"/></svg>
<svg style="left:27px;top:966px;" width="9" height="10" viewBox="0 0 9 10"><path d="M7 1v8l-5-4z" fill="#a8a8a8"/></svg>
<svg style="left:44px;top:966px;" width="9" height="10" viewBox="0 0 9 10"><path d="M2 1v8l5-4z" fill="#a8a8a8"/></svg>
<svg style="left:60px;top:966px;" width="9" height="10" viewBox="0 0 9 10"><path d="M1.500 1v8l5-4z" fill="#a8a8a8"/><rect x="6.700" y="1" width="1.300" height="8" fill="#a8a8a8"/></svg>
<svg style="left:83px;top:965px;" width="10" height="10" viewBox="0 0 10 10"><path d="M5 1v8M1 5h8" stroke="#000" stroke-width="2"/></svg>
<div style="left:103px;top:962px;width:69px;height:17px;background:#fff;border:1px solid #6e6e6e;border-top:none;"></div>
<span class="t" style="left:115px;top:964.84px;font-size:12px;line-height:12px;color:#000;letter-spacing:-0.449px;font-weight:700;">Tabelle1</span>
<div style="left:0px;top:979px;width:1581px;height:1px;background:#d0d0d0;"></div>
<svg style="left:19px;top:989px;" width="18" height="18" viewBox="0 0 18 18"><path d="M3 3l12 12M15 3l-12 12" stroke="#6e6e6e" stroke-width="4" stroke-linecap="round"/><path d="M3 3l12 12M15 3l-12 12" stroke="#8e8e8e" stroke-width="2" stroke-linecap="round"/></svg>
<div style="left:45px;top:986px;width:250px;height:24px;background:#fff;border:1px solid #abadb3;"></div>
<span class="t" style="left:49px;top:992.84px;font-size:12px;line-height:12px;color:#787878;letter-spacing:-0.541px;">Suchen</span>
<div style="left:276px;top:988px;width:17px;height:20px;background:#e1e1e1;border:1px solid #adadad;"></div>
<svg style="left:279px;top:994px;" width="11" height="8" viewBox="0 0 11 8"><path d="M1.500 1.500l4 4 4-4" fill="none" stroke="#444" stroke-width="1.200"/></svg>
<svg style="left:301px;top:988px;" width="20" height="20" viewBox="0 0 20 20"><path d="M3 10l7-6 7 6M6 12l4-3.500 4 3.500M8.500 15l1.500-1.500 1.500 1.500-1.500 1.500z" fill="none" stroke="#dcdcdc" stroke-width="1.200"/></svg>
<svg style="left:333px;top:988px;" width="20" height="20" viewBox="0 0 20 20"><path d="M3 10l7 6 7-6M6 8l4 3.500 4-3.500M8.500 5l1.500-1.500 1.500 1.500-1.500 1.500z" fill="none" stroke="#dcdcdc" stroke-width="1.200"/></svg>
<span class="t" style="left:364px;top:992.84px;font-size:12px;line-height:12px;color:#8c8c8c;letter-spacing:-0.205px;">Alle suchen</span>
<div style="left:433px;top:991px;width:12px;height:12px;background:#fff;border:1px solid #333;"></div>
<span class="t" style="left:450px;top:992.34px;font-size:12px;line-height:12px;color:#000;letter-spacing:-0.133px;"><u>F</u>ormatierte Anzeige</span>
<div style="left:558px;top:991px;width:12px;height:12px;background:#fff;border:1px solid #333;"></div>
<span class="t" style="left:575px;top:992.34px;font-size:12px;line-height:12px;color:#000;letter-spacing:-0.034px;"><u>G</u>roß- und Kleinschreibung beachten</span>
<div style="left:776px;top:988px;width:1px;height:20px;background:#bdbdbd;"></div>
<svg style="left:785px;top:986px;" width="24" height="24" viewBox="0 0 24 24"><path d="M14.500 14.500l7 7" stroke="#2e3436" stroke-width="3.400" stroke-linecap="round"/><circle cx="10.200" cy="9.200" r="7" fill="#f4f6fb" stroke="#3a4fb4" stroke-width="3"/><circle cx="10.200" cy="9.200" r="5.600" fill="none" stroke="#8fa0e0" stroke-width="1"/><path d="M21.300 3.200l2 2-14.500 14.800-3.300 1.300 1.300-3.300z" fill="#f6a038" stroke="#a85c06" stroke-width=".7"/><path d="M20 4.500l2 2" stroke="#c8c8c8" stroke-width="1.200"/><path d="M21.300 3.200l2 2-1 1-2-2z" fill="#ef2929"/><path d="M5.500 21.300l1.100-2.800 1.700 1.700z" fill="#2e3436"/></svg>
<div style="left:817px;top:988px;width:1px;height:20px;background:#bdbdbd;"></div>
<div style="left:0px;top:1018px;width:1920px;height:1px;background:#a9a9a9;"></div>
<div style="left:0px;top:1019px;width:1920px;height:21px;background:#f0f0f0;"></div>
<span class="t" style="left:11px;top:1024.84px;font-size:12px;line-height:12px;color:#000;letter-spacing:-0.267px;">Tabelle 1 von 1</span>
<span class="t" style="left:297px;top:1024.84px;font-size:12px;line-height:12px;color:#000;letter-spacing:-0.227px;">13 Zeilen, 5 Spalten ausgewählt</span>
<span class="t" style="left:670px;top:1024.84px;font-size:12px;line-height:12px;color:#000;letter-spacing:-0.243px;">Standard</span>
<span class="t" style="left:1021px;top:1024.84px;font-size:12px;line-height:12px;color:#000;letter-spacing:-0.103px;">Deutsch (Deutschland)</span>
<span class="t" style="left:1508px;top:1024.84px;font-size:12px;line-height:12px;color:#000;letter-spacing:-0.113px;">Mittelwert: ; Summe: 0</span>
<span class="t" style="left:1880px;top:1024.84px;font-size:12px;line-height:12px;color:#000;letter-spacing:-1.008px;">100 %</span>
<div style="left:287px;top:1021px;width:1px;height:17px;background:#a0a0a0;"></div>
<div style="left:660px;top:1021px;width:1px;height:17px;background:#a0a0a0;"></div>
<div style="left:1243px;top:1021px;width:1px;height:17px;background:#a0a0a0;"></div>
<div style="left:1312px;top:1021px;width:1px;height:17px;background:#a0a0a0;"></div>
<div style="left:1342px;top:1021px;width:1px;height:17px;background:#a0a0a0;"></div>
<div style="left:1372px;top:1021px;width:1px;height:17px;background:#a0a0a0;"></div>
<div style="left:1402px;top:1021px;width:1px;height:17px;background:#a0a0a0;"></div>
<div style="left:1727px;top:1021px;width:1px;height:17px;background:#a0a0a0;"></div>
<div style="left:1871px;top:1021px;width:1px;height:17px;background:#a0a0a0;"></div>
<svg style="left:1322px;top:1024px;" width="14" height="12" viewBox="0 0 14 12"><rect x="1" y="3" width="9" height="6" fill="#8a8a8a"/><path d="M11.500 1.500v9M10 1.500h3M10 10.500h3" stroke="#8a8a8a" stroke-width="1"/></svg>
<svg style="left:1352px;top:1023px;" width="14" height="14" viewBox="0 0 14 14"><path d="M10.500 8v3.500h-8v-10h8" fill="none" stroke="#9a9a9a"/><path d="M6 7.500l2 2 5-5.500" fill="none" stroke="#a8a8a8" stroke-width="1.200"/></svg>
<div style="left:1738px;top:1030px;width:8px;height:1px;background:#8a8a8a;height:2px;"></div>
<div style="left:1752px;top:1030px;width:98px;height:1px;background:#a5a5a5;"></div>
<div style="left:1795px;top:1025px;width:10px;height:10px;background:#fff;border:1px solid #7a7a7a;border-radius:50%;"></div>
<svg style="left:1856px;top:1026px;" width="9" height="9" viewBox="0 0 9 9"><path d="M4.500 0v9M0 4.500h9" stroke="#8a8a8a" stroke-width="1.600"/></svg>
</div>
<div class="sec" id="taskbar">
<div style="left:0px;top:1040px;width:1920px;height:40px;background:#111614;"></div>
<svg style="left:16px;top:1052px;" width="16" height="16" viewBox="0 0 16 16"><path d="M0 2.300l6.500-.9v6.200h-6.500zM7.300 1.300l8.700-1.300v7.600h-8.700zM0 8.400h6.500v6.200l-6.500-.9zM7.300 8.400h8.700v7.600l-8.700-1.300z" fill="#fff"/></svg>
<div style="left:48px;top:1040px;width:344px;height:40px;background:#f2f2f2;"></div>
<div style="left:57.5px;top:1050.5px;width:21px;height:21px;border:3px solid #0c0c0c;border-radius:50%;box-shadow:0 0 1.500px .5px #555, inset 0 0 1px .5px #666;"></div>
<span class="t" style="left:88px;top:1052.80px;font-size:15px;line-height:15px;color:#2b2b2b;letter-spacing:-0.174px;">Zur Suche Text hier eingeben</span>
<svg style="left:364px;top:1050px;" width="14" height="20" viewBox="0 0 14 20"><rect x="4.700" y="2.500" width="4.600" height="9.500" rx="2.300" fill="none" stroke="#333" stroke-width="1.200"/><path d="M2.500 9c0 6 9 6 9 0M7 13.500v3.500M4.500 17.300h5" fill="none" stroke="#333" stroke-width="1.200"/></svg>
<svg style="left:406px;top:1050px;" width="20" height="20" viewBox="0 0 20 20"><rect x="2.500" y="5.500" width="11" height="8.500" fill="none" stroke="#fff" stroke-width="1.300"/><path d="M2.500 3.800v-1.500h10.500v1.500M2.500 15.800v1.500h10.500v-1.500" fill="none" stroke="#fff" stroke-width="1.300"/><path d="M17 2v2.500M17 9.500v8" stroke="#fff" stroke-width="1.500"/><rect x="15.800" y="5.500" width="2.600" height="3" fill="#fff"/></svg>
<svg width="0" height="0" style="left:0;top:0"><defs><radialGradient id="ffA" cx=".75" cy=".15" r="1"><stop offset="0" stop-color="#fff36b"/><stop offset=".3" stop-color="#ffb02e"/><stop offset=".65" stop-color="#ff5b2a"/><stop offset="1" stop-color="#e3175b"/></radialGradient><radialGradient id="ffB" cx=".4" cy=".4" r=".7"><stop offset="0" stop-color="#8e6bff"/><stop offset="1" stop-color="#3a2bb8"/></radialGradient><linearGradient id="tbA" x1="0" y1="0" x2="1" y2="1"><stop offset="0" stop-color="#3a7fd8"/><stop offset="1" stop-color="#1a3f98"/></linearGradient></defs></svg>
<svg style="left:454px;top:1047px;" width="26" height="26" viewBox="0 0 26 26"><path d="M13 3c2-2 5-2.500 6.500-1.500-1 .8-1.200 2-1 3 3.500 2 5.500 5 5.500 9 0 6-5 10.500-11 10.500s-11.500-4.500-11.500-10.500c0-3 1-5.500 2.500-7.500.2 1.500 .8 2.500 1.500 3 .5-3 2.500-5.500 5.500-6.500-.5 1-.5 2 0 3 1-1.500 2-2.200 3.500-2.500z" fill="url(#ffA)"/><circle cx="13.500" cy="13" r="6" fill="url(#ffB)"/><path d="M7 10.500c2-1.500 4.500-1 6 .5-2.500 0-3.500 1.500-3 3 .8 2 4 2.500 6 1-1 3-5 4-8 2-2-1.500-2.500-4.500-1-6.500z" fill="#ff8a20"/><path d="M13.500 2.800c3 .5 6.500 4 7.500 8-2-3-4-4-6.500-4-.5-1.500-.5-2.800-1-4z" fill="#ffd43a"/></svg>
<svg style="left:504px;top:1049px;" width="24" height="22" viewBox="0 0 24 22"><path d="M1 2.500a1 1 0 0 1 1-1h7l1.500 2h11.500a1 1 0 0 1 1 1v3h-22z" fill="#e9b949"/><path d="M3 3h4" stroke="#fff" stroke-width="1"/><rect x="1" y="5.500" width="22" height="13.500" fill="#f9d978"/><path d="M5 19.500v-7.500h14v7.500h-4v-4h-6v4z" fill="#3a9fe8"/></svg>
<svg style="left:552px;top:1047px;" width="26" height="26" viewBox="0 0 26 26"><circle cx="13" cy="13" r="12" fill="url(#tbA)"/><path d="M3 8c4-6 13-8 19-1.500 1.500 3 1.500 5.500 1 8-2-5-7-8-13-7.500-3 0-5 .5-7 1z" fill="#6fa8e8"/><path d="M5 7c3-3 7-4 10-3.500" stroke="#a8cdf5" stroke-width="1.200" fill="none"/><path d="M3 12.500l11.500-4 6.500 8-12 5.500z" fill="#f6f8fb"/><path d="M3 12.500l10 4.500 1.500-8.500M13 17l8-.5" fill="none" stroke="#b4c0d4" stroke-width=".9"/><path d="M8 22.500c6 2 12-1 14-6-3 3.500-8 5.500-14 6z" fill="#16337e"/></svg>
<svg style="left:603px;top:1047px;" width="24" height="26" viewBox="0 0 24 26"><path transform="translate(1,1.300) scale(.86,.9)" d="M1.500 11.500c1-6.500 5.500-10 11-10 6.500 0 10 4.500 10 10.500v2.500h-14.500c.3 3 2.800 4.500 6 4.500 2.800 0 5.200-.8 7.500-2v5c-2.500 1.300-5.300 2-8.500 2-6.500 0-11-4-11-10 0-4 2.200-7.200 6-8.800-1.800 1.500-2.700 3.300-3 5.300h9.500c0-2.800-1.500-4.600-4.500-4.600-3.500 0-6.500 2-8.500 5.600z" fill="#1c80d8"/></svg>
<div style="left:639px;top:1040px;width:48px;height:40px;background:#3d4140;"></div>
<svg style="left:651px;top:1047px;" width="24" height="26" viewBox="0 0 24 26"><path d="M2.700 1.700h11.800l7 7v15.600h-18.800z" fill="#fff" stroke="#1d9a12" stroke-width="1.400"/><path d="M16 1h6.500v6.500z" fill="#1d9a12"/><rect x="5.500" y="10.500" width="13" height="10" fill="#2ba31e"/><path d="M5.500 13.300h13M5.500 15.800h13M5.500 18.300h13M9.500 10.500v10M13.800 10.500v10" stroke="#d8f5d0" stroke-width=".9"/><rect x="13" y="15" width="6.500" height="6.500" fill="#fff" stroke="#bbb" stroke-width=".5"/><path d="M14.500 20.500v-2M16.300 20.500v-4M18 20.500v-3" stroke="#e8632a" stroke-width="1.200"/><path d="M16.300 20.500v-4" stroke="#3a7fd8" stroke-width="1.200"/></svg>
<div style="left:447px;top:1078px;width:40px;height:2px;background:#76b9ed;"></div>
<div style="left:496px;top:1078px;width:40px;height:2px;background:#76b9ed;"></div>
<div style="left:545px;top:1078px;width:40px;height:2px;background:#76b9ed;"></div>
<div style="left:594px;top:1078px;width:40px;height:2px;background:#76b9ed;"></div>
<div style="left:639px;top:1078px;width:48px;height:2px;background:#76b9ed;"></div>
<svg style="left:1649px;top:1055px;" width="14" height="9" viewBox="0 0 14 9"><path d="M1.500 7.500l5.500-5.500 5.500 5.500" fill="none" stroke="#fff" stroke-width="1.400"/></svg>
<svg style="left:1673px;top:1051px;" width="18" height="18" viewBox="0 0 18 18"><circle cx="8" cy="9" r="7.500" fill="#1c6fd0"/><path d="M3 6c3-4 9-3 10 1-2 0-6 1-7 5-2-1-3-3-3-6z" fill="#6ec1f5"/><circle cx="13" cy="13" r="3.500" fill="#3bb54a"/><path d="M11.500 13l1 1 2-2" stroke="#fff" fill="none" stroke-width="1"/></svg>
<svg style="left:1696px;top:1053px;" width="18" height="14" viewBox="0 0 18 14"><rect x="4.500" y="4.500" width="12" height="7" fill="none" stroke="#fff" stroke-width="1.200"/><rect x="6.300" y="6.300" width="8.400" height="3.400" fill="#fff"/><path d="M17.200 6.500v3" stroke="#fff" stroke-width="1.200"/><path d="M1.500 1v2.500M3.800 1v2.500M.8 3.500h3.700v2c0 1-.8 1.500-1.800 1.500v3.500h2" stroke="#fff" stroke-width="1" fill="none"/></svg>
<svg style="left:1720px;top:1052px;" width="18" height="16" viewBox="0 0 18 16"><rect x="4.600" y="2.600" width="12.400" height="8.400" fill="none" stroke="#fff" stroke-width="1.200"/><path d="M10.800 11v3.500M5 14.600h11.500" stroke="#fff" stroke-width="1.200" fill="none"/><rect x="1.500" y="2.600" width="4" height="3.400" fill="#111614" stroke="#fff" stroke-width="1"/><path d="M3 6v8.600h2" stroke="#fff" stroke-width="1" fill="none"/></svg>
<svg style="left:1744px;top:1051px;" width="20" height="18" viewBox="0 0 20 18"><path d="M1.500 6.500h3l4-4v13l-4-4h-3z" fill="none" stroke="#fff" stroke-width="1.200"/><path d="M11 6c1.500 1.500 1.500 4.500 0 6M13.500 4c2.500 2.500 2.500 7.500 0 10M16 2c3.500 3.500 3.500 10.500 0 14" fill="none" stroke="#fff" stroke-width="1.100"/></svg>
<span class="t" style="left:1772px;top:1054.34px;font-size:12px;line-height:12px;color:#fff;letter-spacing:-1.672px;">DEU</span>
<span class="t" style="left:1820px;top:1044.84px;font-size:12px;line-height:12px;color:#fff;letter-spacing:-0.758px;">17:42</span>
<span class="t" style="left:1807px;top:1062.84px;font-size:12px;line-height:12px;color:#fff;letter-spacing:-0.674px;">20.02.2019</span>
<svg style="left:1878px;top:1051px;" width="18" height="18" viewBox="0 0 18 18"><path d="M1.700 1.700h15v11h-5.200l-2.300 2.500-2.300-2.500h-5.200z" fill="none" stroke="#fff" stroke-width="1.300"/></svg>
<div style="left:1915px;top:1040px;width:1px;height:40px;background:#555;"></div>
</div>
<div class="sec" id="dialog">
<div style="left:542px;top:308px;width:656px;height:489px;background:#f0f0f0;border:1px solid #1a80d9;box-shadow:0 1px 12px 1px rgba(0,0,0,.24),0 6px 14px rgba(0,0,0,.22);"></div>
<div style="left:543px;top:309px;width:654px;height:25px;background:#fff;"></div>
<span class="t" style="left:546px;top:314.64px;font-size:12px;line-height:12px;color:#000;letter-spacing:-0.204px;">Zellvorlage: Standard</span>
<svg style="left:1176px;top:315px;" width="12" height="12" viewBox="0 0 12 12"><path d="M1 1l10 10M11 1L1 11" stroke="#000" stroke-width="1.100"/></svg>
<div style="left:551px;top:365px;width:636px;height:370px;background:#fff;border:1px solid #dcdcdc;"></div>
<div style="left:553px;top:344px;width:58px;height:22px;background:#f0f0f0;border:1px solid #dadada;"></div>
<span class="t" style="left:555.4px;top:349.84px;font-size:12px;line-height:12px;color:#000;letter-spacing:-0.150px;">Verwalten</span>
<div style="left:610px;top:344px;width:43px;height:22px;background:#f0f0f0;border:1px solid #dadada;"></div>
<span class="t" style="left:612.8px;top:349.84px;font-size:12px;line-height:12px;color:#000;letter-spacing:-0.141px;">Zahlen</span>
<div style="left:652px;top:344px;width:41px;height:22px;background:#f0f0f0;border:1px solid #dadada;"></div>
<span class="t" style="left:655.2px;top:349.84px;font-size:12px;line-height:12px;color:#000;letter-spacing:-0.119px;">Schrift</span>
<div style="left:692px;top:344px;width:77px;height:22px;background:#f0f0f0;border:1px solid #dadada;"></div>
<span class="t" style="left:695px;top:349.84px;font-size:12px;line-height:12px;color:#000;letter-spacing:0.013px;">Schrifteffekte</span>
<div style="left:768px;top:344px;width:72px;height:22px;background:#f0f0f0;border:1px solid #dadada;"></div>
<span class="t" style="left:771px;top:349.84px;font-size:12px;line-height:12px;color:#000;letter-spacing:0.092px;">Ausrichtung</span>
<div style="left:839px;top:344px;width:70px;height:22px;background:#f0f0f0;border:1px solid #dadada;"></div>
<span class="t" style="left:842.3px;top:349.84px;font-size:12px;line-height:12px;color:#000;letter-spacing:-0.050px;">Umrandung</span>
<div style="left:907px;top:343px;width:75px;height:24px;background:#fff;border:1px solid #dadada;border-bottom:none;"></div>
<div style="left:909px;top:345px;width:68px;height:19px;border:1px dotted #000;"></div>
<span class="t" style="left:910.5px;top:349.34px;font-size:12px;line-height:12px;color:#000;letter-spacing:0.130px;">Hintergrund</span>
<div style="left:981px;top:344px;width:58px;height:22px;background:#f0f0f0;border:1px solid #dadada;"></div>
<span class="t" style="left:982px;top:349.84px;font-size:12px;line-height:12px;color:#000;letter-spacing:-0.115px;">Zellschutz</span>
<span class="t" style="left:560px;top:376.64px;font-size:12px;line-height:12px;color:#000;letter-spacing:-0.001px;font-weight:700;">Hintergrundfarbe</span>
<div style="left:572px;top:396px;width:370px;height:331px;background:#f0f0f0;"></div>
<div style="left:577px;top:396px;width:365px;height:20px;background:#fff;border:1px solid #000;"></div>
<div style="left:579px;top:398px;width:361px;height:16px;background:#fff;border:1px solid #000;"></div>
<span class="t" style="left:581.5px;top:400.64px;font-size:12px;line-height:12px;color:#000;letter-spacing:-0.199px;">Keine Füllung</span>
<style>.sw{width:27px;height:14px;border:1px solid #8e8e8e;box-shadow:0 0 1px 0.5px rgba(120,120,120,.40), inset 1px 1px 0 rgba(255,255,255,.22), inset -1px -1px 0 rgba(0,0,0,.22);}</style>
<div style="left:572px;top:396px;width:370px;height:200px;"><div class="sw" style="left:6px;top:21px;background:#000000;"></div><div class="sw" style="left:36px;top:21px;background:#111111;"></div><div class="sw" style="left:66px;top:21px;background:#1c1c1c;"></div><div class="sw" style="left:96px;top:21px;background:#333333;"></div><div class="sw" style="left:126px;top:21px;background:#666666;"></div><div class="sw" style="left:156px;top:21px;background:#808080;"></div><div class="sw" style="left:186px;top:21px;background:#999999;"></div><div class="sw" style="left:216px;top:21px;background:#b2b2b2;"></div><div class="sw" style="left:246px;top:21px;background:#cccccc;"></div><div class="sw" style="left:276px;top:21px;background:#dddddd;"></div><div class="sw" style="left:306px;top:21px;background:#eeeeee;"></div><div class="sw" style="left:336px;top:21px;background:#ffffff;"></div><div class="sw" style="left:6px;top:38px;background:#fff200;"></div><div class="sw" style="left:36px;top:38px;background:#faa61a;"></div><div class="sw" style="left:66px;top:38px;background:#f58220;"></div><div class="sw" style="left:96px;top:38px;background:#ef413d;"></div><div class="sw" style="left:126px;top:38px;background:#ed1c24;"></div><div class="sw" style="left:156px;top:38px;background:#a3238e;"></div><div class="sw" style="left:186px;top:38px;background:#5c2d91;"></div><div class="sw" style="left:216px;top:38px;background:#21409a;"></div><div class="sw" style="left:246px;top:38px;background:#0066b3;"></div><div class="sw" style="left:276px;top:38px;background:#00a6ad;"></div><div class="sw" style="left:306px;top:38px;background:#00a650;"></div><div class="sw" style="left:336px;top:38px;background:#72bf44;"></div><div class="sw" style="left:6px;top:55px;background:#fffbcc;"></div><div class="sw" style="left:36px;top:55px;background:#fee8cf;"></div><div class="sw" style="left:66px;top:55px;background:#fedec9;"></div><div class="sw" style="left:96px;top:55px;background:#fdd3c4;"></div><div class="sw" style="left:126px;top:55px;background:#fdd5d3;"></div><div class="sw" style="left:156px;top:55px;background:#dfcce4;"></div><div class="sw" style="left:186px;top:55px;background:#c0aedb;"></div><div class="sw" style="left:216px;top:55px;background:#9193cd;"></div><div class="sw" style="left:246px;top:55px;background:#afc6ea;"></div><div class="sw" style="left:276px;top:55px;background:#bee6e3;"></div><div class="sw" style="left:306px;top:55px;background:#bee4d2;"></div><div class="sw" style="left:336px;top:55px;background:#e1f0d6;"></div><div class="sw" style="left:6px;top:72px;background:#fff9ae;"></div><div class="sw" style="left:36px;top:72px;background:#fedca6;"></div><div class="sw" style="left:66px;top:72px;background:#fdc59b;"></div><div class="sw" style="left:96px;top:72px;background:#f9aa9c;"></div><div class="sw" style="left:126px;top:72px;background:#f89c9a;"></div><div class="sw" style="left:156px;top:72px;background:#c6a0cf;"></div><div class="sw" style="left:186px;top:72px;background:#9d87c2;"></div><div class="sw" style="left:216px;top:72px;background:#7577bd;"></div><div class="sw" style="left:246px;top:72px;background:#7fa7da;"></div><div class="sw" style="left:276px;top:72px;background:#8ad3cf;"></div><div class="sw" style="left:306px;top:72px;background:#8dd1b4;"></div><div class="sw" style="left:336px;top:72px;background:#c5e5b0;"></div><div class="sw" style="left:6px;top:89px;background:#fff685;"></div><div class="sw" style="left:36px;top:89px;background:#fdc578;"></div><div class="sw" style="left:66px;top:89px;background:#faa76e;"></div><div class="sw" style="left:96px;top:89px;background:#f78d78;"></div><div class="sw" style="left:126px;top:89px;background:#f3766e;"></div><div class="sw" style="left:156px;top:89px;background:#b97ab5;"></div><div class="sw" style="left:186px;top:89px;background:#826ab1;"></div><div class="sw" style="left:216px;top:89px;background:#5563b3;"></div><div class="sw" style="left:246px;top:89px;background:#5f8bcb;"></div><div class="sw" style="left:276px;top:89px;background:#5ac6c8;"></div><div class="sw" style="left:306px;top:89px;background:#66c294;"></div><div class="sw" style="left:336px;top:89px;background:#afda8e;"></div><div class="sw" style="left:6px;top:106px;background:#fff450;"></div><div class="sw" style="left:36px;top:106px;background:#fcb84c;"></div><div class="sw" style="left:66px;top:106px;background:#f89647;"></div><div class="sw" style="left:96px;top:106px;background:#f36b59;"></div><div class="sw" style="left:126px;top:106px;background:#ee4a4b;"></div><div class="sw" style="left:156px;top:106px;background:#a853a2;"></div><div class="sw" style="left:186px;top:106px;background:#73469e;"></div><div class="sw" style="left:216px;top:106px;background:#434da5;"></div><div class="sw" style="left:246px;top:106px;background:#1d76c0;"></div><div class="sw" style="left:276px;top:106px;background:#00b5bf;"></div><div class="sw" style="left:306px;top:106px;background:#00b172;"></div><div class="sw" style="left:336px;top:106px;background:#8aca67;"></div><div class="sw" style="left:6px;top:123px;background:#e6d600;"></div><div class="sw" style="left:36px;top:123px;background:#dc921a;"></div><div class="sw" style="left:66px;top:123px;background:#d6711e;"></div><div class="sw" style="left:96px;top:123px;background:#d23632;"></div><div class="sw" style="left:126px;top:123px;background:#d1181f;"></div><div class="sw" style="left:156px;top:123px;background:#8e1b7c;"></div><div class="sw" style="left:186px;top:123px;background:#50267f;"></div><div class="sw" style="left:216px;top:123px;background:#1c368a;"></div><div class="sw" style="left:246px;top:123px;background:#005ba1;"></div><div class="sw" style="left:276px;top:123px;background:#00979b;"></div><div class="sw" style="left:306px;top:123px;background:#009452;"></div><div class="sw" style="left:336px;top:123px;background:#67ab3f;"></div><div class="sw" style="left:6px;top:140px;background:#d1c100;"></div><div class="sw" style="left:36px;top:140px;background:#c68214;"></div><div class="sw" style="left:66px;top:140px;background:#c2661a;"></div><div class="sw" style="left:96px;top:140px;background:#bd2e2c;"></div><div class="sw" style="left:126px;top:140px;background:#bf141c;"></div><div class="sw" style="left:156px;top:140px;background:#831471;"></div><div class="sw" style="left:186px;top:140px;background:#491e75;"></div><div class="sw" style="left:216px;top:140px;background:#1a2e80;"></div><div class="sw" style="left:246px;top:140px;background:#005596;"></div><div class="sw" style="left:276px;top:140px;background:#008a8d;"></div><div class="sw" style="left:306px;top:140px;background:#008d4c;"></div><div class="sw" style="left:336px;top:140px;background:#5f9f38;"></div><div class="sw" style="left:6px;top:157px;background:#a09600;"></div><div class="sw" style="left:36px;top:157px;background:#9d6606;"></div><div class="sw" style="left:66px;top:157px;background:#9c5008;"></div><div class="sw" style="left:96px;top:157px;background:#92221f;"></div><div class="sw" style="left:126px;top:157px;background:#94070a;"></div><div class="sw" style="left:156px;top:157px;background:#62005a;"></div><div class="sw" style="left:186px;top:157px;background:#390f60;"></div><div class="sw" style="left:216px;top:157px;background:#0c1c66;"></div><div class="sw" style="left:246px;top:157px;background:#00407c;"></div><div class="sw" style="left:276px;top:157px;background:#006f70;"></div><div class="sw" style="left:306px;top:157px;background:#00723d;"></div><div class="sw" style="left:336px;top:157px;background:#437c28;"></div><div class="sw" style="left:6px;top:174px;background:#6b6200;"></div><div class="sw" style="left:36px;top:174px;background:#694503;"></div><div class="sw" style="left:66px;top:174px;background:#683405;"></div><div class="sw" style="left:96px;top:174px;background:#6a1615;"></div><div class="sw" style="left:126px;top:174px;background:#610304;"></div><div class="sw" style="left:156px;top:174px;background:#33002f;"></div><div class="sw" style="left:186px;top:174px;background:#1f0830;"></div><div class="sw" style="left:216px;top:174px;background:#050e34;"></div><div class="sw" style="left:246px;top:174px;background:#00213f;"></div><div class="sw" style="left:276px;top:174px;background:#003b3c;"></div><div class="sw" style="left:306px;top:174px;background:#00341a;"></div><div class="sw" style="left:336px;top:174px;background:#2a501a;"></div></div>
<div style="left:574px;top:707px;width:365px;height:1px;background:#6a6a6a;"></div>
<span class="t" style="left:607px;width:300px;text-align:center;top:712.14px;font-size:12px;line-height:12px;color:#000;letter-spacing:-0.199px;">Keine Füllung</span>
<div style="left:960px;top:396px;width:220px;height:165px;background:#fff;border:1px solid #000;"></div>
<div style="left:557px;top:754px;width:83px;height:28px;background:#e1e1e1;border:1px solid #adadad;"></div>
<span class="t" style="left:448.5px;width:300px;text-align:center;top:762.84px;font-size:12px;line-height:12px;color:#000;letter-spacing:0.246px;"><u>H</u>ilfe</span>
<div style="left:827px;top:754px;width:83px;height:28px;background:#e1e1e1;border:2px solid #0078d7;"></div>
<span class="t" style="left:718.5px;width:300px;text-align:center;top:762.84px;font-size:12px;line-height:12px;color:#000;letter-spacing:-0.344px;">OK</span>
<div style="left:918px;top:754px;width:83px;height:28px;background:#e1e1e1;border:1px solid #adadad;"></div>
<span class="t" style="left:809.5px;width:300px;text-align:center;top:762.84px;font-size:12px;line-height:12px;color:#000;letter-spacing:-0.006px;">Abbrechen</span>
<div style="left:1009px;top:754px;width:83px;height:28px;background:#e1e1e1;border:1px solid #adadad;"></div>
<span class="t" style="left:900.5px;width:300px;text-align:center;top:762.84px;font-size:12px;line-height:12px;color:#000;letter-spacing:0.062px;"><u>Z</u>urück</span>
<div style="left:1100px;top:754px;width:83px;height:28px;background:#e1e1e1;border:1px solid #adadad;"></div>
<span class="t" style="left:991.5px;width:300px;text-align:center;top:762.84px;font-size:12px;line-height:12px;color:#000;letter-spacing:-0.243px;"><u>S</u>tandard</span>
</div>
</body></html>
